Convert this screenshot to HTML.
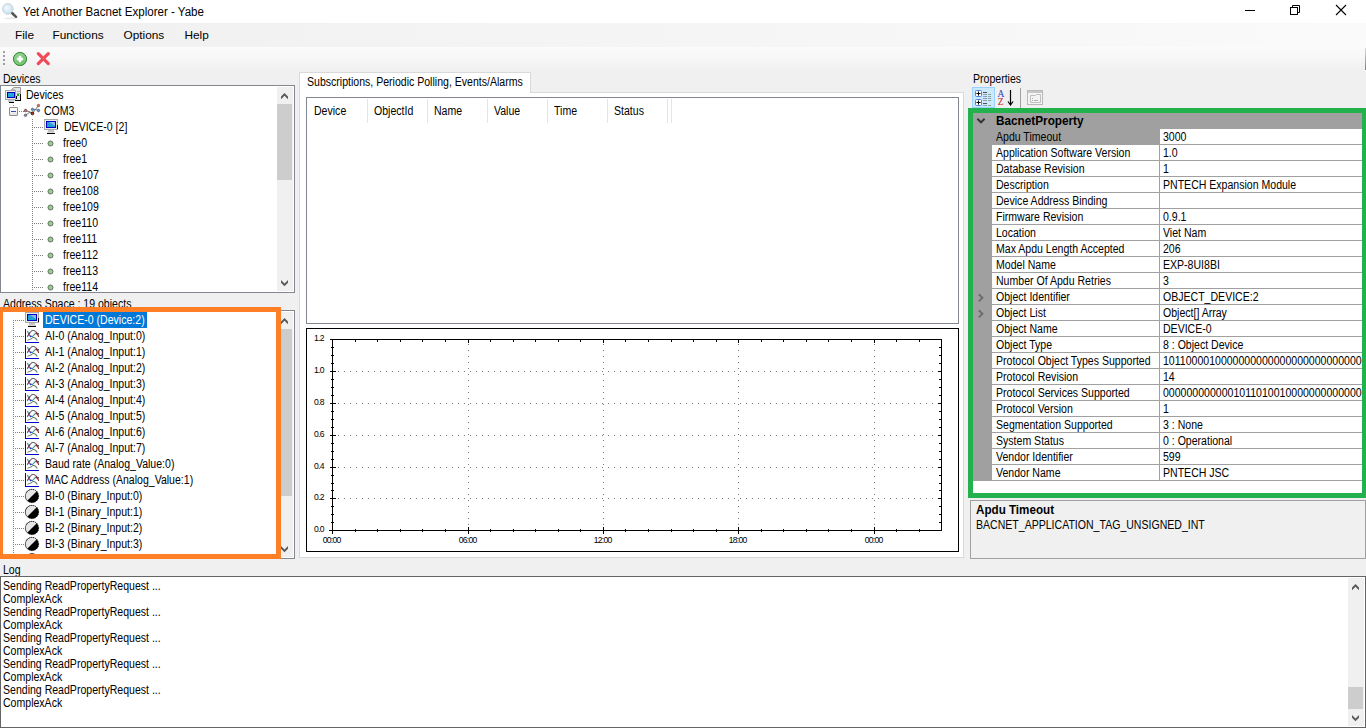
<!DOCTYPE html><html><head><meta charset="utf-8"><style>
html,body{margin:0;padding:0;}
body{width:1366px;height:728px;overflow:hidden;position:relative;background:#f0f0f0;font-family:"Liberation Sans",sans-serif;}
.t{position:absolute;white-space:nowrap;line-height:20px;}
svg{overflow:visible}
</style></head><body>
<div style="position:absolute;left:0px;top:0px;width:1366px;height:23px;background:#fff"></div>
<svg style="position:absolute;left:0px;top:0px;" width="24" height="23" viewBox="0 0 24 23"><defs><radialGradient id="mg" cx="0.4" cy="0.4" r="0.7"><stop offset="0" stop-color="#f4faff"/><stop offset="1" stop-color="#bcdcee"/></radialGradient></defs>
<ellipse cx="10" cy="18.3" rx="6" ry="0.9" fill="#e8e8e8"/>
<circle cx="7.9" cy="8.9" r="5.3" fill="url(#mg)" stroke="#c9d3da" stroke-width="1"/>
<line x1="12.3" y1="13.3" x2="16" y2="16.9" stroke="#555" stroke-width="2.6" stroke-linecap="round"/></svg>
<div class="t" style="left:23px;top:1.84px;font-size:12px;color:#000;transform:scaleX(0.963);transform-origin:0 0;">Yet Another Bacnet Explorer - Yabe</div>
<div style="position:absolute;left:1245px;top:10px;width:10px;height:1px;background:#000"></div>
<svg style="position:absolute;left:1290px;top:5px;" width="11" height="11" viewBox="0 0 11 11"><rect x="0.5" y="2.5" width="7" height="7" fill="none" stroke="#000"/><path d="M2.5 2.5 V0.5 H9.5 V7.5 H7.5" fill="none" stroke="#000"/></svg>
<svg style="position:absolute;left:1336px;top:5px;" width="11" height="11" viewBox="0 0 11 11"><path d="M0 0 L10 10 M10 0 L0 10" stroke="#000" stroke-width="1.1"/></svg>
<div style="position:absolute;left:0px;top:23px;width:1366px;height:24px;background:linear-gradient(to right,#f0f0f0,#fafafa)"></div>
<div class="t" style="left:15px;top:24.71px;font-size:11.8px;color:#000;">File</div>
<div class="t" style="left:52.5px;top:24.71px;font-size:11.8px;color:#000;">Functions</div>
<div class="t" style="left:123.5px;top:24.71px;font-size:11.8px;color:#000;">Options</div>
<div class="t" style="left:184.5px;top:24.71px;font-size:11.8px;color:#000;">Help</div>
<div style="position:absolute;left:0px;top:47px;width:1366px;height:25px;background:linear-gradient(to bottom,#fbfbfb 0%,#f7f7f7 40%,#f0f0f0 100%)"></div>
<div style="position:absolute;left:3px;top:51px;width:2px;height:2px;background:#a0a0a0"></div>
<div style="position:absolute;left:3px;top:55px;width:2px;height:2px;background:#a0a0a0"></div>
<div style="position:absolute;left:3px;top:59px;width:2px;height:2px;background:#a0a0a0"></div>
<div style="position:absolute;left:3px;top:63px;width:2px;height:2px;background:#a0a0a0"></div>
<svg style="position:absolute;left:12px;top:51px;" width="16" height="16" viewBox="0 0 16 16"><defs><radialGradient id="gp" cx="0.45" cy="0.4" r="0.65"><stop offset="0" stop-color="#9ed89a"/><stop offset="0.8" stop-color="#62b85c"/><stop offset="1" stop-color="#4aa046"/></radialGradient></defs><circle cx="8" cy="8" r="6.6" fill="url(#gp)" stroke="#3a8a38" stroke-width="1"/><circle cx="8" cy="8" r="5.2" fill="none" stroke="#b8e4b4" stroke-width="0.6" opacity="0.8"/><path d="M8 4.8 V11.2 M4.8 8 H11.2" stroke="#fff" stroke-width="2.5"/></svg>
<svg style="position:absolute;left:36px;top:51px;" width="15" height="16" viewBox="0 0 15 16"><path d="M2.3 2.6 L12.3 12.6 M12.3 2.6 L2.3 12.6" stroke="#f04a58" stroke-width="3.2" stroke-linecap="round"/><path d="M7.3 6.6 L8.3 7.6 L7.3 8.6 L6.3 7.6 Z" fill="#f46a74"/></svg>
<div class="t" style="left:3px;top:69.04px;font-size:12px;color:#000;transform:scaleX(0.879);transform-origin:0 0;">Devices</div>
<div style="position:absolute;left:0px;top:85px;width:295px;height:208px;background:#fff;border:1px solid #828790;box-sizing:border-box"></div>
<div style="position:absolute;left:277px;top:87px;width:16px;height:204px;background:#f0f0f0"></div>
<div style="position:absolute;left:277px;top:104px;width:15px;height:76px;background:#cdcdcd"></div>
<svg style="position:absolute;left:281px;top:93px;" width="8" height="7" viewBox="0 0 8 7"><path d="M0 3.6 L3.5 0 L7 3.6 L7 6.3 L3.5 2.8 L0 6.3 Z" fill="#5a5a5a"/></svg>
<svg style="position:absolute;left:281px;top:280px;" width="8" height="7" viewBox="0 0 8 7"><path d="M0 0 L3.5 3.5 L7 0 L7 2.7 L3.5 6.3 L0 2.7 Z" fill="#5a5a5a"/></svg>
<svg style="position:absolute;left:5px;top:87px;" width="17" height="17" viewBox="0 0 17 17"><path d="M6.5 2.5 L9 0.5 H15.5 V13.5 H10 V3 H6.5 Z" fill="#e4e4e4" stroke="#9a9a9a" stroke-width="1"/><g shape-rendering="crispEdges"><rect x="12" y="4" width="3" height="1" fill="#b0b0b0"/><rect x="12" y="6" width="3" height="1" fill="#b0b0b0"/><rect x="12" y="7" width="2" height="2" fill="#10b010"/><rect x="11" y="9" width="1" height="3" fill="#000"/><rect x="15" y="7" width="1" height="7" fill="#000"/><rect x="10" y="13" width="6" height="1" fill="#000"/><rect x="0" y="3" width="11" height="10" fill="#a8a8a8"/><rect x="1" y="4" width="9" height="8" fill="#ececec"/><rect x="2" y="5" width="8" height="6" fill="#0000c0"/><rect x="3" y="6" width="6" height="4" fill="#20a8d8"/><rect x="3" y="13" width="6" height="2" fill="#c8c8c8"/><rect x="4" y="15" width="5" height="1" fill="#000"/></g></svg>
<div class="t" style="left:26px;top:84.84px;font-size:12px;color:#000;transform:scaleX(0.879);transform-origin:0 0;">Devices</div>
<div style="position:absolute;left:13px;top:105px;width:1px;height:1px;background:repeating-linear-gradient(to bottom,#808080 0 1px,transparent 1px 2px)"></div>
<div style="position:absolute;left:9px;top:107px;width:9px;height:9px;background:linear-gradient(#fff,#e4e4e4);border:1px solid #8c8c8c;box-sizing:border-box;border-radius:1px"></div>
<div style="position:absolute;left:11px;top:111px;width:5px;height:1px;background:#3050b0"></div>
<div style="position:absolute;left:19px;top:111px;width:5px;height:1px;background:repeating-linear-gradient(to right,#808080 0 1px,transparent 1px 2px)"></div>
<svg style="position:absolute;left:24px;top:104px;" width="17" height="14" viewBox="0 0 17 14"><path d="M-0.5 7.5 L1.6 6.5 L6 8 L8.4 9.4 M1.5 11.3 L6 8 M8.4 9.4 L11.5 5.5 L14.5 1.5 M8.5 5.4 L11.5 5.5 L14.5 6.5" fill="none" stroke="#606060" stroke-width="0.9"/><circle cx="1.6" cy="6.5" r="1.25" fill="#f06060" stroke="#404040" stroke-width="0.7"/><circle cx="1.5" cy="11.3" r="1.25" fill="#7a9ce0" stroke="#505050" stroke-width="0.7"/><circle cx="8.4" cy="9.4" r="1.4" fill="#d03030" stroke="#101010" stroke-width="0.9"/><circle cx="8.5" cy="5.4" r="1.2" fill="#7a9ce0" stroke="#405050" stroke-width="0.7"/><circle cx="9.5" cy="5.4" r="0.8" fill="#10b0d0"/><circle cx="14.5" cy="1.5" r="1.2" fill="#f07070" stroke="#505050" stroke-width="0.7"/><circle cx="14.5" cy="6.5" r="1.2" fill="#7a9ce0" stroke="#305050" stroke-width="0.7"/></svg>
<div class="t" style="left:44px;top:100.84px;font-size:12px;color:#000;transform:scaleX(0.879);transform-origin:0 0;">COM3</div>
<div style="position:absolute;left:32px;top:119px;width:1px;height:172px;background:repeating-linear-gradient(to bottom,#808080 0 1px,transparent 1px 2px)"></div>
<div style="position:absolute;left:34px;top:127px;width:9px;height:1px;background:repeating-linear-gradient(to right,#808080 0 1px,transparent 1px 2px)"></div>
<svg style="position:absolute;left:44px;top:119px;" width="16" height="16" viewBox="0 0 16 16"><g shape-rendering="crispEdges"><rect x="0" y="0" width="14" height="11" fill="#a8a8a8"/><rect x="1" y="1" width="12" height="9" fill="#ececec"/><rect x="2" y="2" width="10" height="7" fill="#0000c0"/><rect x="3" y="3" width="8" height="5" fill="#1ea0d6"/></g><path d="M5 3 L11 3 L11 7 Z" fill="#96b4e4"/><g shape-rendering="crispEdges"><rect x="13" y="6" width="1" height="4" fill="#000"/><rect x="4" y="11" width="6" height="2" fill="#c4c4c4"/><rect x="3" y="13" width="8" height="1" fill="#d8d8d8"/><rect x="3" y="14" width="8" height="1" fill="#000"/></g></svg>
<div class="t" style="left:64px;top:116.84px;font-size:12px;color:#000;transform:scaleX(0.879);transform-origin:0 0;">DEVICE-0 [2]</div>
<div style="position:absolute;left:34px;top:143px;width:9px;height:1px;background:repeating-linear-gradient(to right,#808080 0 1px,transparent 1px 2px)"></div>
<svg style="position:absolute;left:47px;top:139.5px;" width="8" height="8" viewBox="0 0 8 8"><circle cx="3.5" cy="3.5" r="2.5" fill="#8cd28c" stroke="#6c6c6c" stroke-width="1"/></svg>
<div class="t" style="left:63px;top:132.84px;font-size:12px;color:#000;transform:scaleX(0.879);transform-origin:0 0;">free0</div>
<div style="position:absolute;left:34px;top:159px;width:9px;height:1px;background:repeating-linear-gradient(to right,#808080 0 1px,transparent 1px 2px)"></div>
<svg style="position:absolute;left:47px;top:155.5px;" width="8" height="8" viewBox="0 0 8 8"><circle cx="3.5" cy="3.5" r="2.5" fill="#8cd28c" stroke="#6c6c6c" stroke-width="1"/></svg>
<div class="t" style="left:63px;top:148.84px;font-size:12px;color:#000;transform:scaleX(0.879);transform-origin:0 0;">free1</div>
<div style="position:absolute;left:34px;top:175px;width:9px;height:1px;background:repeating-linear-gradient(to right,#808080 0 1px,transparent 1px 2px)"></div>
<svg style="position:absolute;left:47px;top:171.5px;" width="8" height="8" viewBox="0 0 8 8"><circle cx="3.5" cy="3.5" r="2.5" fill="#8cd28c" stroke="#6c6c6c" stroke-width="1"/></svg>
<div class="t" style="left:63px;top:164.84px;font-size:12px;color:#000;transform:scaleX(0.879);transform-origin:0 0;">free107</div>
<div style="position:absolute;left:34px;top:191px;width:9px;height:1px;background:repeating-linear-gradient(to right,#808080 0 1px,transparent 1px 2px)"></div>
<svg style="position:absolute;left:47px;top:187.5px;" width="8" height="8" viewBox="0 0 8 8"><circle cx="3.5" cy="3.5" r="2.5" fill="#8cd28c" stroke="#6c6c6c" stroke-width="1"/></svg>
<div class="t" style="left:63px;top:180.84px;font-size:12px;color:#000;transform:scaleX(0.879);transform-origin:0 0;">free108</div>
<div style="position:absolute;left:34px;top:207px;width:9px;height:1px;background:repeating-linear-gradient(to right,#808080 0 1px,transparent 1px 2px)"></div>
<svg style="position:absolute;left:47px;top:203.5px;" width="8" height="8" viewBox="0 0 8 8"><circle cx="3.5" cy="3.5" r="2.5" fill="#8cd28c" stroke="#6c6c6c" stroke-width="1"/></svg>
<div class="t" style="left:63px;top:196.84px;font-size:12px;color:#000;transform:scaleX(0.879);transform-origin:0 0;">free109</div>
<div style="position:absolute;left:34px;top:223px;width:9px;height:1px;background:repeating-linear-gradient(to right,#808080 0 1px,transparent 1px 2px)"></div>
<svg style="position:absolute;left:47px;top:219.5px;" width="8" height="8" viewBox="0 0 8 8"><circle cx="3.5" cy="3.5" r="2.5" fill="#8cd28c" stroke="#6c6c6c" stroke-width="1"/></svg>
<div class="t" style="left:63px;top:212.84px;font-size:12px;color:#000;transform:scaleX(0.879);transform-origin:0 0;">free110</div>
<div style="position:absolute;left:34px;top:239px;width:9px;height:1px;background:repeating-linear-gradient(to right,#808080 0 1px,transparent 1px 2px)"></div>
<svg style="position:absolute;left:47px;top:235.5px;" width="8" height="8" viewBox="0 0 8 8"><circle cx="3.5" cy="3.5" r="2.5" fill="#8cd28c" stroke="#6c6c6c" stroke-width="1"/></svg>
<div class="t" style="left:63px;top:228.84px;font-size:12px;color:#000;transform:scaleX(0.879);transform-origin:0 0;">free111</div>
<div style="position:absolute;left:34px;top:255px;width:9px;height:1px;background:repeating-linear-gradient(to right,#808080 0 1px,transparent 1px 2px)"></div>
<svg style="position:absolute;left:47px;top:251.5px;" width="8" height="8" viewBox="0 0 8 8"><circle cx="3.5" cy="3.5" r="2.5" fill="#8cd28c" stroke="#6c6c6c" stroke-width="1"/></svg>
<div class="t" style="left:63px;top:244.84px;font-size:12px;color:#000;transform:scaleX(0.879);transform-origin:0 0;">free112</div>
<div style="position:absolute;left:34px;top:271px;width:9px;height:1px;background:repeating-linear-gradient(to right,#808080 0 1px,transparent 1px 2px)"></div>
<svg style="position:absolute;left:47px;top:267.5px;" width="8" height="8" viewBox="0 0 8 8"><circle cx="3.5" cy="3.5" r="2.5" fill="#8cd28c" stroke="#6c6c6c" stroke-width="1"/></svg>
<div class="t" style="left:63px;top:260.84px;font-size:12px;color:#000;transform:scaleX(0.879);transform-origin:0 0;">free113</div>
<div style="position:absolute;left:34px;top:287px;width:9px;height:1px;background:repeating-linear-gradient(to right,#808080 0 1px,transparent 1px 2px)"></div>
<svg style="position:absolute;left:47px;top:283.5px;" width="8" height="8" viewBox="0 0 8 8"><circle cx="3.5" cy="3.5" r="2.5" fill="#8cd28c" stroke="#6c6c6c" stroke-width="1"/></svg>
<div class="t" style="left:63px;top:276.84px;font-size:12px;color:#000;transform:scaleX(0.879);transform-origin:0 0;">free114</div>
<div style="position:absolute;left:0px;top:292px;width:295px;height:1px;background:#828790"></div>
<div class="t" style="left:3px;top:294.24px;font-size:12px;color:#000;transform:scaleX(0.879);transform-origin:0 0;">Address Space : 19 objects</div>
<div style="position:absolute;left:0px;top:310px;width:295px;height:249px;background:#fff;border:1px solid #828790;box-sizing:border-box"></div>
<div style="position:absolute;left:277px;top:312px;width:16px;height:245px;background:#f0f0f0"></div>
<div style="position:absolute;left:277px;top:329px;width:15px;height:167px;background:#cdcdcd"></div>
<svg style="position:absolute;left:281px;top:318px;" width="8" height="7" viewBox="0 0 8 7"><path d="M0 3.6 L3.5 0 L7 3.6 L7 6.3 L3.5 2.8 L0 6.3 Z" fill="#5a5a5a"/></svg>
<svg style="position:absolute;left:281px;top:546px;" width="8" height="7" viewBox="0 0 8 7"><path d="M0 0 L3.5 3.5 L7 0 L7 2.7 L3.5 6.3 L0 2.7 Z" fill="#5a5a5a"/></svg>
<div style="position:absolute;left:13px;top:320px;width:1px;height:238px;background:repeating-linear-gradient(to bottom,#808080 0 1px,transparent 1px 2px)"></div>
<div style="position:absolute;left:15px;top:320px;width:9px;height:1px;background:repeating-linear-gradient(to right,#808080 0 1px,transparent 1px 2px)"></div>
<svg style="position:absolute;left:25px;top:312px;" width="16" height="16" viewBox="0 0 16 16"><g shape-rendering="crispEdges"><rect x="0" y="0" width="14" height="11" fill="#a8a8a8"/><rect x="1" y="1" width="12" height="9" fill="#ececec"/><rect x="2" y="2" width="10" height="7" fill="#0000c0"/><rect x="3" y="3" width="8" height="5" fill="#1ea0d6"/></g><path d="M5 3 L11 3 L11 7 Z" fill="#96b4e4"/><g shape-rendering="crispEdges"><rect x="13" y="6" width="1" height="4" fill="#000"/><rect x="4" y="11" width="6" height="2" fill="#c4c4c4"/><rect x="3" y="13" width="8" height="1" fill="#d8d8d8"/><rect x="3" y="14" width="8" height="1" fill="#000"/></g></svg>
<div style="position:absolute;left:43px;top:312px;width:104px;height:16px;background:#0078d7"></div>
<div class="t" style="left:45px;top:309.84px;font-size:12px;color:#fff;transform:scaleX(0.879);transform-origin:0 0;">DEVICE-0 (Device:2)</div>
<div style="position:absolute;left:15px;top:336px;width:9px;height:1px;background:repeating-linear-gradient(to right,#808080 0 1px,transparent 1px 2px)"></div>
<svg style="position:absolute;left:25px;top:328px;" width="16" height="16" viewBox="0 0 16 16"><path d="M2.4 3 C3.5 5 4.5 8.4 5.7 8.4 L7.4 8.4 C8.5 8.4 9.5 5.4 10.8 5.4 L14 5.5" fill="none" stroke="#2a8aa0" stroke-width="1.1"/><path d="M2.4 8.7 C3.3 7 4.5 4.5 5.6 4" fill="none" stroke="#8a2020" stroke-width="1.1"/><path d="M5.6 4 C6.5 2.6 7.2 2.4 8 2.4 C9.5 2.4 10.5 3.5 11 4" fill="none" stroke="#707070" stroke-width="1.1"/><path d="M11 4 C12 5 13.3 6.5 13.7 9" fill="none" stroke="#7a2a2a" stroke-width="1.1"/><path d="M2.4 12.3 C4 12 5 11.4 6 10.9 C7 10 8 9.5 8.5 9.5 C9.5 9.5 10.5 10.2 10.9 10.6 C11.5 11.4 12 12 12.3 12.6" fill="none" stroke="#6a7a6a" stroke-width="1.1"/><circle cx="12.4" cy="6.4" r="0.9" fill="#f00"/><circle cx="5.6" cy="8.4" r="0.8" fill="#1030e0"/><rect x="0" y="1" width="1" height="14" fill="#0000c8" shape-rendering="crispEdges"/><rect x="0" y="14" width="14" height="1" fill="#0000c8" shape-rendering="crispEdges"/></svg>
<div class="t" style="left:45px;top:325.84px;font-size:12px;color:#000;transform:scaleX(0.879);transform-origin:0 0;">AI-0 (Analog_Input:0)</div>
<div style="position:absolute;left:15px;top:352px;width:9px;height:1px;background:repeating-linear-gradient(to right,#808080 0 1px,transparent 1px 2px)"></div>
<svg style="position:absolute;left:25px;top:344px;" width="16" height="16" viewBox="0 0 16 16"><path d="M2.4 3 C3.5 5 4.5 8.4 5.7 8.4 L7.4 8.4 C8.5 8.4 9.5 5.4 10.8 5.4 L14 5.5" fill="none" stroke="#2a8aa0" stroke-width="1.1"/><path d="M2.4 8.7 C3.3 7 4.5 4.5 5.6 4" fill="none" stroke="#8a2020" stroke-width="1.1"/><path d="M5.6 4 C6.5 2.6 7.2 2.4 8 2.4 C9.5 2.4 10.5 3.5 11 4" fill="none" stroke="#707070" stroke-width="1.1"/><path d="M11 4 C12 5 13.3 6.5 13.7 9" fill="none" stroke="#7a2a2a" stroke-width="1.1"/><path d="M2.4 12.3 C4 12 5 11.4 6 10.9 C7 10 8 9.5 8.5 9.5 C9.5 9.5 10.5 10.2 10.9 10.6 C11.5 11.4 12 12 12.3 12.6" fill="none" stroke="#6a7a6a" stroke-width="1.1"/><circle cx="12.4" cy="6.4" r="0.9" fill="#f00"/><circle cx="5.6" cy="8.4" r="0.8" fill="#1030e0"/><rect x="0" y="1" width="1" height="14" fill="#0000c8" shape-rendering="crispEdges"/><rect x="0" y="14" width="14" height="1" fill="#0000c8" shape-rendering="crispEdges"/></svg>
<div class="t" style="left:45px;top:341.84px;font-size:12px;color:#000;transform:scaleX(0.879);transform-origin:0 0;">AI-1 (Analog_Input:1)</div>
<div style="position:absolute;left:15px;top:368px;width:9px;height:1px;background:repeating-linear-gradient(to right,#808080 0 1px,transparent 1px 2px)"></div>
<svg style="position:absolute;left:25px;top:360px;" width="16" height="16" viewBox="0 0 16 16"><path d="M2.4 3 C3.5 5 4.5 8.4 5.7 8.4 L7.4 8.4 C8.5 8.4 9.5 5.4 10.8 5.4 L14 5.5" fill="none" stroke="#2a8aa0" stroke-width="1.1"/><path d="M2.4 8.7 C3.3 7 4.5 4.5 5.6 4" fill="none" stroke="#8a2020" stroke-width="1.1"/><path d="M5.6 4 C6.5 2.6 7.2 2.4 8 2.4 C9.5 2.4 10.5 3.5 11 4" fill="none" stroke="#707070" stroke-width="1.1"/><path d="M11 4 C12 5 13.3 6.5 13.7 9" fill="none" stroke="#7a2a2a" stroke-width="1.1"/><path d="M2.4 12.3 C4 12 5 11.4 6 10.9 C7 10 8 9.5 8.5 9.5 C9.5 9.5 10.5 10.2 10.9 10.6 C11.5 11.4 12 12 12.3 12.6" fill="none" stroke="#6a7a6a" stroke-width="1.1"/><circle cx="12.4" cy="6.4" r="0.9" fill="#f00"/><circle cx="5.6" cy="8.4" r="0.8" fill="#1030e0"/><rect x="0" y="1" width="1" height="14" fill="#0000c8" shape-rendering="crispEdges"/><rect x="0" y="14" width="14" height="1" fill="#0000c8" shape-rendering="crispEdges"/></svg>
<div class="t" style="left:45px;top:357.84px;font-size:12px;color:#000;transform:scaleX(0.879);transform-origin:0 0;">AI-2 (Analog_Input:2)</div>
<div style="position:absolute;left:15px;top:384px;width:9px;height:1px;background:repeating-linear-gradient(to right,#808080 0 1px,transparent 1px 2px)"></div>
<svg style="position:absolute;left:25px;top:376px;" width="16" height="16" viewBox="0 0 16 16"><path d="M2.4 3 C3.5 5 4.5 8.4 5.7 8.4 L7.4 8.4 C8.5 8.4 9.5 5.4 10.8 5.4 L14 5.5" fill="none" stroke="#2a8aa0" stroke-width="1.1"/><path d="M2.4 8.7 C3.3 7 4.5 4.5 5.6 4" fill="none" stroke="#8a2020" stroke-width="1.1"/><path d="M5.6 4 C6.5 2.6 7.2 2.4 8 2.4 C9.5 2.4 10.5 3.5 11 4" fill="none" stroke="#707070" stroke-width="1.1"/><path d="M11 4 C12 5 13.3 6.5 13.7 9" fill="none" stroke="#7a2a2a" stroke-width="1.1"/><path d="M2.4 12.3 C4 12 5 11.4 6 10.9 C7 10 8 9.5 8.5 9.5 C9.5 9.5 10.5 10.2 10.9 10.6 C11.5 11.4 12 12 12.3 12.6" fill="none" stroke="#6a7a6a" stroke-width="1.1"/><circle cx="12.4" cy="6.4" r="0.9" fill="#f00"/><circle cx="5.6" cy="8.4" r="0.8" fill="#1030e0"/><rect x="0" y="1" width="1" height="14" fill="#0000c8" shape-rendering="crispEdges"/><rect x="0" y="14" width="14" height="1" fill="#0000c8" shape-rendering="crispEdges"/></svg>
<div class="t" style="left:45px;top:373.84px;font-size:12px;color:#000;transform:scaleX(0.879);transform-origin:0 0;">AI-3 (Analog_Input:3)</div>
<div style="position:absolute;left:15px;top:400px;width:9px;height:1px;background:repeating-linear-gradient(to right,#808080 0 1px,transparent 1px 2px)"></div>
<svg style="position:absolute;left:25px;top:392px;" width="16" height="16" viewBox="0 0 16 16"><path d="M2.4 3 C3.5 5 4.5 8.4 5.7 8.4 L7.4 8.4 C8.5 8.4 9.5 5.4 10.8 5.4 L14 5.5" fill="none" stroke="#2a8aa0" stroke-width="1.1"/><path d="M2.4 8.7 C3.3 7 4.5 4.5 5.6 4" fill="none" stroke="#8a2020" stroke-width="1.1"/><path d="M5.6 4 C6.5 2.6 7.2 2.4 8 2.4 C9.5 2.4 10.5 3.5 11 4" fill="none" stroke="#707070" stroke-width="1.1"/><path d="M11 4 C12 5 13.3 6.5 13.7 9" fill="none" stroke="#7a2a2a" stroke-width="1.1"/><path d="M2.4 12.3 C4 12 5 11.4 6 10.9 C7 10 8 9.5 8.5 9.5 C9.5 9.5 10.5 10.2 10.9 10.6 C11.5 11.4 12 12 12.3 12.6" fill="none" stroke="#6a7a6a" stroke-width="1.1"/><circle cx="12.4" cy="6.4" r="0.9" fill="#f00"/><circle cx="5.6" cy="8.4" r="0.8" fill="#1030e0"/><rect x="0" y="1" width="1" height="14" fill="#0000c8" shape-rendering="crispEdges"/><rect x="0" y="14" width="14" height="1" fill="#0000c8" shape-rendering="crispEdges"/></svg>
<div class="t" style="left:45px;top:389.84px;font-size:12px;color:#000;transform:scaleX(0.879);transform-origin:0 0;">AI-4 (Analog_Input:4)</div>
<div style="position:absolute;left:15px;top:416px;width:9px;height:1px;background:repeating-linear-gradient(to right,#808080 0 1px,transparent 1px 2px)"></div>
<svg style="position:absolute;left:25px;top:408px;" width="16" height="16" viewBox="0 0 16 16"><path d="M2.4 3 C3.5 5 4.5 8.4 5.7 8.4 L7.4 8.4 C8.5 8.4 9.5 5.4 10.8 5.4 L14 5.5" fill="none" stroke="#2a8aa0" stroke-width="1.1"/><path d="M2.4 8.7 C3.3 7 4.5 4.5 5.6 4" fill="none" stroke="#8a2020" stroke-width="1.1"/><path d="M5.6 4 C6.5 2.6 7.2 2.4 8 2.4 C9.5 2.4 10.5 3.5 11 4" fill="none" stroke="#707070" stroke-width="1.1"/><path d="M11 4 C12 5 13.3 6.5 13.7 9" fill="none" stroke="#7a2a2a" stroke-width="1.1"/><path d="M2.4 12.3 C4 12 5 11.4 6 10.9 C7 10 8 9.5 8.5 9.5 C9.5 9.5 10.5 10.2 10.9 10.6 C11.5 11.4 12 12 12.3 12.6" fill="none" stroke="#6a7a6a" stroke-width="1.1"/><circle cx="12.4" cy="6.4" r="0.9" fill="#f00"/><circle cx="5.6" cy="8.4" r="0.8" fill="#1030e0"/><rect x="0" y="1" width="1" height="14" fill="#0000c8" shape-rendering="crispEdges"/><rect x="0" y="14" width="14" height="1" fill="#0000c8" shape-rendering="crispEdges"/></svg>
<div class="t" style="left:45px;top:405.84px;font-size:12px;color:#000;transform:scaleX(0.879);transform-origin:0 0;">AI-5 (Analog_Input:5)</div>
<div style="position:absolute;left:15px;top:432px;width:9px;height:1px;background:repeating-linear-gradient(to right,#808080 0 1px,transparent 1px 2px)"></div>
<svg style="position:absolute;left:25px;top:424px;" width="16" height="16" viewBox="0 0 16 16"><path d="M2.4 3 C3.5 5 4.5 8.4 5.7 8.4 L7.4 8.4 C8.5 8.4 9.5 5.4 10.8 5.4 L14 5.5" fill="none" stroke="#2a8aa0" stroke-width="1.1"/><path d="M2.4 8.7 C3.3 7 4.5 4.5 5.6 4" fill="none" stroke="#8a2020" stroke-width="1.1"/><path d="M5.6 4 C6.5 2.6 7.2 2.4 8 2.4 C9.5 2.4 10.5 3.5 11 4" fill="none" stroke="#707070" stroke-width="1.1"/><path d="M11 4 C12 5 13.3 6.5 13.7 9" fill="none" stroke="#7a2a2a" stroke-width="1.1"/><path d="M2.4 12.3 C4 12 5 11.4 6 10.9 C7 10 8 9.5 8.5 9.5 C9.5 9.5 10.5 10.2 10.9 10.6 C11.5 11.4 12 12 12.3 12.6" fill="none" stroke="#6a7a6a" stroke-width="1.1"/><circle cx="12.4" cy="6.4" r="0.9" fill="#f00"/><circle cx="5.6" cy="8.4" r="0.8" fill="#1030e0"/><rect x="0" y="1" width="1" height="14" fill="#0000c8" shape-rendering="crispEdges"/><rect x="0" y="14" width="14" height="1" fill="#0000c8" shape-rendering="crispEdges"/></svg>
<div class="t" style="left:45px;top:421.84px;font-size:12px;color:#000;transform:scaleX(0.879);transform-origin:0 0;">AI-6 (Analog_Input:6)</div>
<div style="position:absolute;left:15px;top:448px;width:9px;height:1px;background:repeating-linear-gradient(to right,#808080 0 1px,transparent 1px 2px)"></div>
<svg style="position:absolute;left:25px;top:440px;" width="16" height="16" viewBox="0 0 16 16"><path d="M2.4 3 C3.5 5 4.5 8.4 5.7 8.4 L7.4 8.4 C8.5 8.4 9.5 5.4 10.8 5.4 L14 5.5" fill="none" stroke="#2a8aa0" stroke-width="1.1"/><path d="M2.4 8.7 C3.3 7 4.5 4.5 5.6 4" fill="none" stroke="#8a2020" stroke-width="1.1"/><path d="M5.6 4 C6.5 2.6 7.2 2.4 8 2.4 C9.5 2.4 10.5 3.5 11 4" fill="none" stroke="#707070" stroke-width="1.1"/><path d="M11 4 C12 5 13.3 6.5 13.7 9" fill="none" stroke="#7a2a2a" stroke-width="1.1"/><path d="M2.4 12.3 C4 12 5 11.4 6 10.9 C7 10 8 9.5 8.5 9.5 C9.5 9.5 10.5 10.2 10.9 10.6 C11.5 11.4 12 12 12.3 12.6" fill="none" stroke="#6a7a6a" stroke-width="1.1"/><circle cx="12.4" cy="6.4" r="0.9" fill="#f00"/><circle cx="5.6" cy="8.4" r="0.8" fill="#1030e0"/><rect x="0" y="1" width="1" height="14" fill="#0000c8" shape-rendering="crispEdges"/><rect x="0" y="14" width="14" height="1" fill="#0000c8" shape-rendering="crispEdges"/></svg>
<div class="t" style="left:45px;top:437.84px;font-size:12px;color:#000;transform:scaleX(0.879);transform-origin:0 0;">AI-7 (Analog_Input:7)</div>
<div style="position:absolute;left:15px;top:464px;width:9px;height:1px;background:repeating-linear-gradient(to right,#808080 0 1px,transparent 1px 2px)"></div>
<svg style="position:absolute;left:25px;top:456px;" width="16" height="16" viewBox="0 0 16 16"><path d="M2.4 3 C3.5 5 4.5 8.4 5.7 8.4 L7.4 8.4 C8.5 8.4 9.5 5.4 10.8 5.4 L14 5.5" fill="none" stroke="#2a8aa0" stroke-width="1.1"/><path d="M2.4 8.7 C3.3 7 4.5 4.5 5.6 4" fill="none" stroke="#8a2020" stroke-width="1.1"/><path d="M5.6 4 C6.5 2.6 7.2 2.4 8 2.4 C9.5 2.4 10.5 3.5 11 4" fill="none" stroke="#707070" stroke-width="1.1"/><path d="M11 4 C12 5 13.3 6.5 13.7 9" fill="none" stroke="#7a2a2a" stroke-width="1.1"/><path d="M2.4 12.3 C4 12 5 11.4 6 10.9 C7 10 8 9.5 8.5 9.5 C9.5 9.5 10.5 10.2 10.9 10.6 C11.5 11.4 12 12 12.3 12.6" fill="none" stroke="#6a7a6a" stroke-width="1.1"/><circle cx="12.4" cy="6.4" r="0.9" fill="#f00"/><circle cx="5.6" cy="8.4" r="0.8" fill="#1030e0"/><rect x="0" y="1" width="1" height="14" fill="#0000c8" shape-rendering="crispEdges"/><rect x="0" y="14" width="14" height="1" fill="#0000c8" shape-rendering="crispEdges"/></svg>
<div class="t" style="left:45px;top:453.84px;font-size:12px;color:#000;transform:scaleX(0.879);transform-origin:0 0;">Baud rate (Analog_Value:0)</div>
<div style="position:absolute;left:15px;top:480px;width:9px;height:1px;background:repeating-linear-gradient(to right,#808080 0 1px,transparent 1px 2px)"></div>
<svg style="position:absolute;left:25px;top:472px;" width="16" height="16" viewBox="0 0 16 16"><path d="M2.4 3 C3.5 5 4.5 8.4 5.7 8.4 L7.4 8.4 C8.5 8.4 9.5 5.4 10.8 5.4 L14 5.5" fill="none" stroke="#2a8aa0" stroke-width="1.1"/><path d="M2.4 8.7 C3.3 7 4.5 4.5 5.6 4" fill="none" stroke="#8a2020" stroke-width="1.1"/><path d="M5.6 4 C6.5 2.6 7.2 2.4 8 2.4 C9.5 2.4 10.5 3.5 11 4" fill="none" stroke="#707070" stroke-width="1.1"/><path d="M11 4 C12 5 13.3 6.5 13.7 9" fill="none" stroke="#7a2a2a" stroke-width="1.1"/><path d="M2.4 12.3 C4 12 5 11.4 6 10.9 C7 10 8 9.5 8.5 9.5 C9.5 9.5 10.5 10.2 10.9 10.6 C11.5 11.4 12 12 12.3 12.6" fill="none" stroke="#6a7a6a" stroke-width="1.1"/><circle cx="12.4" cy="6.4" r="0.9" fill="#f00"/><circle cx="5.6" cy="8.4" r="0.8" fill="#1030e0"/><rect x="0" y="1" width="1" height="14" fill="#0000c8" shape-rendering="crispEdges"/><rect x="0" y="14" width="14" height="1" fill="#0000c8" shape-rendering="crispEdges"/></svg>
<div class="t" style="left:45px;top:469.84px;font-size:12px;color:#000;transform:scaleX(0.879);transform-origin:0 0;">MAC Address (Analog_Value:1)</div>
<div style="position:absolute;left:15px;top:496px;width:9px;height:1px;background:repeating-linear-gradient(to right,#808080 0 1px,transparent 1px 2px)"></div>
<svg style="position:absolute;left:25px;top:489px;" width="16" height="16" viewBox="0 0 16 16"><circle cx="7" cy="7" r="6.8" fill="#000"/>
<path d="M2.2 11.8 A6.8 6.8 0 0 1 11.8 2.2 Z" fill="#e6e6e6"/>
<circle cx="7" cy="7" r="6.6" fill="none" stroke="#000" stroke-width="0.8" stroke-dasharray="1 1"/></svg>
<div class="t" style="left:45px;top:485.84px;font-size:12px;color:#000;transform:scaleX(0.879);transform-origin:0 0;">BI-0 (Binary_Input:0)</div>
<div style="position:absolute;left:15px;top:512px;width:9px;height:1px;background:repeating-linear-gradient(to right,#808080 0 1px,transparent 1px 2px)"></div>
<svg style="position:absolute;left:25px;top:505px;" width="16" height="16" viewBox="0 0 16 16"><circle cx="7" cy="7" r="6.8" fill="#000"/>
<path d="M2.2 11.8 A6.8 6.8 0 0 1 11.8 2.2 Z" fill="#e6e6e6"/>
<circle cx="7" cy="7" r="6.6" fill="none" stroke="#000" stroke-width="0.8" stroke-dasharray="1 1"/></svg>
<div class="t" style="left:45px;top:501.84px;font-size:12px;color:#000;transform:scaleX(0.879);transform-origin:0 0;">BI-1 (Binary_Input:1)</div>
<div style="position:absolute;left:15px;top:528px;width:9px;height:1px;background:repeating-linear-gradient(to right,#808080 0 1px,transparent 1px 2px)"></div>
<svg style="position:absolute;left:25px;top:521px;" width="16" height="16" viewBox="0 0 16 16"><circle cx="7" cy="7" r="6.8" fill="#000"/>
<path d="M2.2 11.8 A6.8 6.8 0 0 1 11.8 2.2 Z" fill="#e6e6e6"/>
<circle cx="7" cy="7" r="6.6" fill="none" stroke="#000" stroke-width="0.8" stroke-dasharray="1 1"/></svg>
<div class="t" style="left:45px;top:517.84px;font-size:12px;color:#000;transform:scaleX(0.879);transform-origin:0 0;">BI-2 (Binary_Input:2)</div>
<div style="position:absolute;left:15px;top:544px;width:9px;height:1px;background:repeating-linear-gradient(to right,#808080 0 1px,transparent 1px 2px)"></div>
<svg style="position:absolute;left:25px;top:537px;" width="16" height="16" viewBox="0 0 16 16"><circle cx="7" cy="7" r="6.8" fill="#000"/>
<path d="M2.2 11.8 A6.8 6.8 0 0 1 11.8 2.2 Z" fill="#e6e6e6"/>
<circle cx="7" cy="7" r="6.6" fill="none" stroke="#000" stroke-width="0.8" stroke-dasharray="1 1"/></svg>
<div class="t" style="left:45px;top:533.84px;font-size:12px;color:#000;transform:scaleX(0.879);transform-origin:0 0;">BI-3 (Binary_Input:3)</div>
<svg style="position:absolute;left:25px;top:553px;overflow:hidden" width="16" height="5" viewBox="0 0 16 5"><circle cx="7" cy="7" r="6.8" fill="#000"/></svg>
<div style="position:absolute;left:1px;top:558px;width:293px;height:1px;background:#828790"></div>
<div style="position:absolute;left:-2px;top:307px;width:283px;height:252px;border:5px solid #ff7f27;box-sizing:border-box"></div>
<div style="position:absolute;left:299px;top:92px;width:665px;height:466px;background:#fff;border:1px solid #d9d9d9;box-sizing:border-box"></div>
<div style="position:absolute;left:299px;top:72px;width:232px;height:21px;background:#fff;border:1px solid #d9d9d9;border-bottom:none;box-sizing:border-box"></div>
<div class="t" style="left:307px;top:72.04px;font-size:12px;color:#000;transform:scaleX(0.879);transform-origin:0 0;">Subscriptions, Periodic Polling, Events/Alarms</div>
<div style="position:absolute;left:306px;top:97px;width:653px;height:227px;background:#fff;border:1px solid #828790;box-sizing:border-box"></div>
<div class="t" style="left:314px;top:101.34px;font-size:12px;color:#000;transform:scaleX(0.879);transform-origin:0 0;">Device</div>
<div class="t" style="left:374px;top:101.34px;font-size:12px;color:#000;transform:scaleX(0.879);transform-origin:0 0;">ObjectId</div>
<div class="t" style="left:434px;top:101.34px;font-size:12px;color:#000;transform:scaleX(0.879);transform-origin:0 0;">Name</div>
<div class="t" style="left:494px;top:101.34px;font-size:12px;color:#000;transform:scaleX(0.879);transform-origin:0 0;">Value</div>
<div class="t" style="left:554px;top:101.34px;font-size:12px;color:#000;transform:scaleX(0.879);transform-origin:0 0;">Time</div>
<div class="t" style="left:614px;top:101.34px;font-size:12px;color:#000;transform:scaleX(0.879);transform-origin:0 0;">Status</div>
<div style="position:absolute;left:367px;top:99px;width:1px;height:24px;background:#e5e5e5"></div>
<div style="position:absolute;left:427px;top:99px;width:1px;height:24px;background:#e5e5e5"></div>
<div style="position:absolute;left:487px;top:99px;width:1px;height:24px;background:#e5e5e5"></div>
<div style="position:absolute;left:547px;top:99px;width:1px;height:24px;background:#e5e5e5"></div>
<div style="position:absolute;left:607px;top:99px;width:1px;height:24px;background:#e5e5e5"></div>
<div style="position:absolute;left:667px;top:99px;width:1px;height:24px;background:#e5e5e5"></div>
<div style="position:absolute;left:671px;top:99px;width:1px;height:24px;background:#e5e5e5"></div>
<div style="position:absolute;left:306px;top:328px;width:653px;height:224px;background:#fff;border:1px solid #000;box-sizing:border-box"></div>
<svg style="position:absolute;left:0;top:0" width="1366" height="728" shape-rendering="crispEdges"><rect x="338" y="371" width="1" height="1" fill="#7a7a7a"/><rect x="344" y="371" width="1" height="1" fill="#7a7a7a"/><rect x="350" y="371" width="1" height="1" fill="#7a7a7a"/><rect x="356" y="371" width="1" height="1" fill="#7a7a7a"/><rect x="362" y="371" width="1" height="1" fill="#7a7a7a"/><rect x="368" y="371" width="1" height="1" fill="#7a7a7a"/><rect x="374" y="371" width="1" height="1" fill="#7a7a7a"/><rect x="380" y="371" width="1" height="1" fill="#7a7a7a"/><rect x="386" y="371" width="1" height="1" fill="#7a7a7a"/><rect x="392" y="371" width="1" height="1" fill="#7a7a7a"/><rect x="398" y="371" width="1" height="1" fill="#7a7a7a"/><rect x="404" y="371" width="1" height="1" fill="#7a7a7a"/><rect x="410" y="371" width="1" height="1" fill="#7a7a7a"/><rect x="416" y="371" width="1" height="1" fill="#7a7a7a"/><rect x="422" y="371" width="1" height="1" fill="#7a7a7a"/><rect x="428" y="371" width="1" height="1" fill="#7a7a7a"/><rect x="434" y="371" width="1" height="1" fill="#7a7a7a"/><rect x="440" y="371" width="1" height="1" fill="#7a7a7a"/><rect x="446" y="371" width="1" height="1" fill="#7a7a7a"/><rect x="452" y="371" width="1" height="1" fill="#7a7a7a"/><rect x="458" y="371" width="1" height="1" fill="#7a7a7a"/><rect x="464" y="371" width="1" height="1" fill="#7a7a7a"/><rect x="470" y="371" width="1" height="1" fill="#7a7a7a"/><rect x="476" y="371" width="1" height="1" fill="#7a7a7a"/><rect x="482" y="371" width="1" height="1" fill="#7a7a7a"/><rect x="488" y="371" width="1" height="1" fill="#7a7a7a"/><rect x="494" y="371" width="1" height="1" fill="#7a7a7a"/><rect x="500" y="371" width="1" height="1" fill="#7a7a7a"/><rect x="506" y="371" width="1" height="1" fill="#7a7a7a"/><rect x="512" y="371" width="1" height="1" fill="#7a7a7a"/><rect x="518" y="371" width="1" height="1" fill="#7a7a7a"/><rect x="524" y="371" width="1" height="1" fill="#7a7a7a"/><rect x="530" y="371" width="1" height="1" fill="#7a7a7a"/><rect x="536" y="371" width="1" height="1" fill="#7a7a7a"/><rect x="542" y="371" width="1" height="1" fill="#7a7a7a"/><rect x="548" y="371" width="1" height="1" fill="#7a7a7a"/><rect x="554" y="371" width="1" height="1" fill="#7a7a7a"/><rect x="560" y="371" width="1" height="1" fill="#7a7a7a"/><rect x="566" y="371" width="1" height="1" fill="#7a7a7a"/><rect x="572" y="371" width="1" height="1" fill="#7a7a7a"/><rect x="578" y="371" width="1" height="1" fill="#7a7a7a"/><rect x="584" y="371" width="1" height="1" fill="#7a7a7a"/><rect x="590" y="371" width="1" height="1" fill="#7a7a7a"/><rect x="596" y="371" width="1" height="1" fill="#7a7a7a"/><rect x="602" y="371" width="1" height="1" fill="#7a7a7a"/><rect x="608" y="371" width="1" height="1" fill="#7a7a7a"/><rect x="614" y="371" width="1" height="1" fill="#7a7a7a"/><rect x="620" y="371" width="1" height="1" fill="#7a7a7a"/><rect x="626" y="371" width="1" height="1" fill="#7a7a7a"/><rect x="632" y="371" width="1" height="1" fill="#7a7a7a"/><rect x="638" y="371" width="1" height="1" fill="#7a7a7a"/><rect x="644" y="371" width="1" height="1" fill="#7a7a7a"/><rect x="650" y="371" width="1" height="1" fill="#7a7a7a"/><rect x="656" y="371" width="1" height="1" fill="#7a7a7a"/><rect x="662" y="371" width="1" height="1" fill="#7a7a7a"/><rect x="668" y="371" width="1" height="1" fill="#7a7a7a"/><rect x="674" y="371" width="1" height="1" fill="#7a7a7a"/><rect x="680" y="371" width="1" height="1" fill="#7a7a7a"/><rect x="686" y="371" width="1" height="1" fill="#7a7a7a"/><rect x="692" y="371" width="1" height="1" fill="#7a7a7a"/><rect x="698" y="371" width="1" height="1" fill="#7a7a7a"/><rect x="704" y="371" width="1" height="1" fill="#7a7a7a"/><rect x="710" y="371" width="1" height="1" fill="#7a7a7a"/><rect x="716" y="371" width="1" height="1" fill="#7a7a7a"/><rect x="722" y="371" width="1" height="1" fill="#7a7a7a"/><rect x="728" y="371" width="1" height="1" fill="#7a7a7a"/><rect x="734" y="371" width="1" height="1" fill="#7a7a7a"/><rect x="740" y="371" width="1" height="1" fill="#7a7a7a"/><rect x="746" y="371" width="1" height="1" fill="#7a7a7a"/><rect x="752" y="371" width="1" height="1" fill="#7a7a7a"/><rect x="758" y="371" width="1" height="1" fill="#7a7a7a"/><rect x="764" y="371" width="1" height="1" fill="#7a7a7a"/><rect x="770" y="371" width="1" height="1" fill="#7a7a7a"/><rect x="776" y="371" width="1" height="1" fill="#7a7a7a"/><rect x="782" y="371" width="1" height="1" fill="#7a7a7a"/><rect x="788" y="371" width="1" height="1" fill="#7a7a7a"/><rect x="794" y="371" width="1" height="1" fill="#7a7a7a"/><rect x="800" y="371" width="1" height="1" fill="#7a7a7a"/><rect x="806" y="371" width="1" height="1" fill="#7a7a7a"/><rect x="812" y="371" width="1" height="1" fill="#7a7a7a"/><rect x="818" y="371" width="1" height="1" fill="#7a7a7a"/><rect x="824" y="371" width="1" height="1" fill="#7a7a7a"/><rect x="830" y="371" width="1" height="1" fill="#7a7a7a"/><rect x="836" y="371" width="1" height="1" fill="#7a7a7a"/><rect x="842" y="371" width="1" height="1" fill="#7a7a7a"/><rect x="848" y="371" width="1" height="1" fill="#7a7a7a"/><rect x="854" y="371" width="1" height="1" fill="#7a7a7a"/><rect x="860" y="371" width="1" height="1" fill="#7a7a7a"/><rect x="866" y="371" width="1" height="1" fill="#7a7a7a"/><rect x="872" y="371" width="1" height="1" fill="#7a7a7a"/><rect x="878" y="371" width="1" height="1" fill="#7a7a7a"/><rect x="884" y="371" width="1" height="1" fill="#7a7a7a"/><rect x="890" y="371" width="1" height="1" fill="#7a7a7a"/><rect x="896" y="371" width="1" height="1" fill="#7a7a7a"/><rect x="902" y="371" width="1" height="1" fill="#7a7a7a"/><rect x="908" y="371" width="1" height="1" fill="#7a7a7a"/><rect x="914" y="371" width="1" height="1" fill="#7a7a7a"/><rect x="920" y="371" width="1" height="1" fill="#7a7a7a"/><rect x="926" y="371" width="1" height="1" fill="#7a7a7a"/><rect x="932" y="371" width="1" height="1" fill="#7a7a7a"/><rect x="938" y="371" width="1" height="1" fill="#7a7a7a"/><rect x="338" y="403" width="1" height="1" fill="#7a7a7a"/><rect x="344" y="403" width="1" height="1" fill="#7a7a7a"/><rect x="350" y="403" width="1" height="1" fill="#7a7a7a"/><rect x="356" y="403" width="1" height="1" fill="#7a7a7a"/><rect x="362" y="403" width="1" height="1" fill="#7a7a7a"/><rect x="368" y="403" width="1" height="1" fill="#7a7a7a"/><rect x="374" y="403" width="1" height="1" fill="#7a7a7a"/><rect x="380" y="403" width="1" height="1" fill="#7a7a7a"/><rect x="386" y="403" width="1" height="1" fill="#7a7a7a"/><rect x="392" y="403" width="1" height="1" fill="#7a7a7a"/><rect x="398" y="403" width="1" height="1" fill="#7a7a7a"/><rect x="404" y="403" width="1" height="1" fill="#7a7a7a"/><rect x="410" y="403" width="1" height="1" fill="#7a7a7a"/><rect x="416" y="403" width="1" height="1" fill="#7a7a7a"/><rect x="422" y="403" width="1" height="1" fill="#7a7a7a"/><rect x="428" y="403" width="1" height="1" fill="#7a7a7a"/><rect x="434" y="403" width="1" height="1" fill="#7a7a7a"/><rect x="440" y="403" width="1" height="1" fill="#7a7a7a"/><rect x="446" y="403" width="1" height="1" fill="#7a7a7a"/><rect x="452" y="403" width="1" height="1" fill="#7a7a7a"/><rect x="458" y="403" width="1" height="1" fill="#7a7a7a"/><rect x="464" y="403" width="1" height="1" fill="#7a7a7a"/><rect x="470" y="403" width="1" height="1" fill="#7a7a7a"/><rect x="476" y="403" width="1" height="1" fill="#7a7a7a"/><rect x="482" y="403" width="1" height="1" fill="#7a7a7a"/><rect x="488" y="403" width="1" height="1" fill="#7a7a7a"/><rect x="494" y="403" width="1" height="1" fill="#7a7a7a"/><rect x="500" y="403" width="1" height="1" fill="#7a7a7a"/><rect x="506" y="403" width="1" height="1" fill="#7a7a7a"/><rect x="512" y="403" width="1" height="1" fill="#7a7a7a"/><rect x="518" y="403" width="1" height="1" fill="#7a7a7a"/><rect x="524" y="403" width="1" height="1" fill="#7a7a7a"/><rect x="530" y="403" width="1" height="1" fill="#7a7a7a"/><rect x="536" y="403" width="1" height="1" fill="#7a7a7a"/><rect x="542" y="403" width="1" height="1" fill="#7a7a7a"/><rect x="548" y="403" width="1" height="1" fill="#7a7a7a"/><rect x="554" y="403" width="1" height="1" fill="#7a7a7a"/><rect x="560" y="403" width="1" height="1" fill="#7a7a7a"/><rect x="566" y="403" width="1" height="1" fill="#7a7a7a"/><rect x="572" y="403" width="1" height="1" fill="#7a7a7a"/><rect x="578" y="403" width="1" height="1" fill="#7a7a7a"/><rect x="584" y="403" width="1" height="1" fill="#7a7a7a"/><rect x="590" y="403" width="1" height="1" fill="#7a7a7a"/><rect x="596" y="403" width="1" height="1" fill="#7a7a7a"/><rect x="602" y="403" width="1" height="1" fill="#7a7a7a"/><rect x="608" y="403" width="1" height="1" fill="#7a7a7a"/><rect x="614" y="403" width="1" height="1" fill="#7a7a7a"/><rect x="620" y="403" width="1" height="1" fill="#7a7a7a"/><rect x="626" y="403" width="1" height="1" fill="#7a7a7a"/><rect x="632" y="403" width="1" height="1" fill="#7a7a7a"/><rect x="638" y="403" width="1" height="1" fill="#7a7a7a"/><rect x="644" y="403" width="1" height="1" fill="#7a7a7a"/><rect x="650" y="403" width="1" height="1" fill="#7a7a7a"/><rect x="656" y="403" width="1" height="1" fill="#7a7a7a"/><rect x="662" y="403" width="1" height="1" fill="#7a7a7a"/><rect x="668" y="403" width="1" height="1" fill="#7a7a7a"/><rect x="674" y="403" width="1" height="1" fill="#7a7a7a"/><rect x="680" y="403" width="1" height="1" fill="#7a7a7a"/><rect x="686" y="403" width="1" height="1" fill="#7a7a7a"/><rect x="692" y="403" width="1" height="1" fill="#7a7a7a"/><rect x="698" y="403" width="1" height="1" fill="#7a7a7a"/><rect x="704" y="403" width="1" height="1" fill="#7a7a7a"/><rect x="710" y="403" width="1" height="1" fill="#7a7a7a"/><rect x="716" y="403" width="1" height="1" fill="#7a7a7a"/><rect x="722" y="403" width="1" height="1" fill="#7a7a7a"/><rect x="728" y="403" width="1" height="1" fill="#7a7a7a"/><rect x="734" y="403" width="1" height="1" fill="#7a7a7a"/><rect x="740" y="403" width="1" height="1" fill="#7a7a7a"/><rect x="746" y="403" width="1" height="1" fill="#7a7a7a"/><rect x="752" y="403" width="1" height="1" fill="#7a7a7a"/><rect x="758" y="403" width="1" height="1" fill="#7a7a7a"/><rect x="764" y="403" width="1" height="1" fill="#7a7a7a"/><rect x="770" y="403" width="1" height="1" fill="#7a7a7a"/><rect x="776" y="403" width="1" height="1" fill="#7a7a7a"/><rect x="782" y="403" width="1" height="1" fill="#7a7a7a"/><rect x="788" y="403" width="1" height="1" fill="#7a7a7a"/><rect x="794" y="403" width="1" height="1" fill="#7a7a7a"/><rect x="800" y="403" width="1" height="1" fill="#7a7a7a"/><rect x="806" y="403" width="1" height="1" fill="#7a7a7a"/><rect x="812" y="403" width="1" height="1" fill="#7a7a7a"/><rect x="818" y="403" width="1" height="1" fill="#7a7a7a"/><rect x="824" y="403" width="1" height="1" fill="#7a7a7a"/><rect x="830" y="403" width="1" height="1" fill="#7a7a7a"/><rect x="836" y="403" width="1" height="1" fill="#7a7a7a"/><rect x="842" y="403" width="1" height="1" fill="#7a7a7a"/><rect x="848" y="403" width="1" height="1" fill="#7a7a7a"/><rect x="854" y="403" width="1" height="1" fill="#7a7a7a"/><rect x="860" y="403" width="1" height="1" fill="#7a7a7a"/><rect x="866" y="403" width="1" height="1" fill="#7a7a7a"/><rect x="872" y="403" width="1" height="1" fill="#7a7a7a"/><rect x="878" y="403" width="1" height="1" fill="#7a7a7a"/><rect x="884" y="403" width="1" height="1" fill="#7a7a7a"/><rect x="890" y="403" width="1" height="1" fill="#7a7a7a"/><rect x="896" y="403" width="1" height="1" fill="#7a7a7a"/><rect x="902" y="403" width="1" height="1" fill="#7a7a7a"/><rect x="908" y="403" width="1" height="1" fill="#7a7a7a"/><rect x="914" y="403" width="1" height="1" fill="#7a7a7a"/><rect x="920" y="403" width="1" height="1" fill="#7a7a7a"/><rect x="926" y="403" width="1" height="1" fill="#7a7a7a"/><rect x="932" y="403" width="1" height="1" fill="#7a7a7a"/><rect x="938" y="403" width="1" height="1" fill="#7a7a7a"/><rect x="338" y="435" width="1" height="1" fill="#7a7a7a"/><rect x="344" y="435" width="1" height="1" fill="#7a7a7a"/><rect x="350" y="435" width="1" height="1" fill="#7a7a7a"/><rect x="356" y="435" width="1" height="1" fill="#7a7a7a"/><rect x="362" y="435" width="1" height="1" fill="#7a7a7a"/><rect x="368" y="435" width="1" height="1" fill="#7a7a7a"/><rect x="374" y="435" width="1" height="1" fill="#7a7a7a"/><rect x="380" y="435" width="1" height="1" fill="#7a7a7a"/><rect x="386" y="435" width="1" height="1" fill="#7a7a7a"/><rect x="392" y="435" width="1" height="1" fill="#7a7a7a"/><rect x="398" y="435" width="1" height="1" fill="#7a7a7a"/><rect x="404" y="435" width="1" height="1" fill="#7a7a7a"/><rect x="410" y="435" width="1" height="1" fill="#7a7a7a"/><rect x="416" y="435" width="1" height="1" fill="#7a7a7a"/><rect x="422" y="435" width="1" height="1" fill="#7a7a7a"/><rect x="428" y="435" width="1" height="1" fill="#7a7a7a"/><rect x="434" y="435" width="1" height="1" fill="#7a7a7a"/><rect x="440" y="435" width="1" height="1" fill="#7a7a7a"/><rect x="446" y="435" width="1" height="1" fill="#7a7a7a"/><rect x="452" y="435" width="1" height="1" fill="#7a7a7a"/><rect x="458" y="435" width="1" height="1" fill="#7a7a7a"/><rect x="464" y="435" width="1" height="1" fill="#7a7a7a"/><rect x="470" y="435" width="1" height="1" fill="#7a7a7a"/><rect x="476" y="435" width="1" height="1" fill="#7a7a7a"/><rect x="482" y="435" width="1" height="1" fill="#7a7a7a"/><rect x="488" y="435" width="1" height="1" fill="#7a7a7a"/><rect x="494" y="435" width="1" height="1" fill="#7a7a7a"/><rect x="500" y="435" width="1" height="1" fill="#7a7a7a"/><rect x="506" y="435" width="1" height="1" fill="#7a7a7a"/><rect x="512" y="435" width="1" height="1" fill="#7a7a7a"/><rect x="518" y="435" width="1" height="1" fill="#7a7a7a"/><rect x="524" y="435" width="1" height="1" fill="#7a7a7a"/><rect x="530" y="435" width="1" height="1" fill="#7a7a7a"/><rect x="536" y="435" width="1" height="1" fill="#7a7a7a"/><rect x="542" y="435" width="1" height="1" fill="#7a7a7a"/><rect x="548" y="435" width="1" height="1" fill="#7a7a7a"/><rect x="554" y="435" width="1" height="1" fill="#7a7a7a"/><rect x="560" y="435" width="1" height="1" fill="#7a7a7a"/><rect x="566" y="435" width="1" height="1" fill="#7a7a7a"/><rect x="572" y="435" width="1" height="1" fill="#7a7a7a"/><rect x="578" y="435" width="1" height="1" fill="#7a7a7a"/><rect x="584" y="435" width="1" height="1" fill="#7a7a7a"/><rect x="590" y="435" width="1" height="1" fill="#7a7a7a"/><rect x="596" y="435" width="1" height="1" fill="#7a7a7a"/><rect x="602" y="435" width="1" height="1" fill="#7a7a7a"/><rect x="608" y="435" width="1" height="1" fill="#7a7a7a"/><rect x="614" y="435" width="1" height="1" fill="#7a7a7a"/><rect x="620" y="435" width="1" height="1" fill="#7a7a7a"/><rect x="626" y="435" width="1" height="1" fill="#7a7a7a"/><rect x="632" y="435" width="1" height="1" fill="#7a7a7a"/><rect x="638" y="435" width="1" height="1" fill="#7a7a7a"/><rect x="644" y="435" width="1" height="1" fill="#7a7a7a"/><rect x="650" y="435" width="1" height="1" fill="#7a7a7a"/><rect x="656" y="435" width="1" height="1" fill="#7a7a7a"/><rect x="662" y="435" width="1" height="1" fill="#7a7a7a"/><rect x="668" y="435" width="1" height="1" fill="#7a7a7a"/><rect x="674" y="435" width="1" height="1" fill="#7a7a7a"/><rect x="680" y="435" width="1" height="1" fill="#7a7a7a"/><rect x="686" y="435" width="1" height="1" fill="#7a7a7a"/><rect x="692" y="435" width="1" height="1" fill="#7a7a7a"/><rect x="698" y="435" width="1" height="1" fill="#7a7a7a"/><rect x="704" y="435" width="1" height="1" fill="#7a7a7a"/><rect x="710" y="435" width="1" height="1" fill="#7a7a7a"/><rect x="716" y="435" width="1" height="1" fill="#7a7a7a"/><rect x="722" y="435" width="1" height="1" fill="#7a7a7a"/><rect x="728" y="435" width="1" height="1" fill="#7a7a7a"/><rect x="734" y="435" width="1" height="1" fill="#7a7a7a"/><rect x="740" y="435" width="1" height="1" fill="#7a7a7a"/><rect x="746" y="435" width="1" height="1" fill="#7a7a7a"/><rect x="752" y="435" width="1" height="1" fill="#7a7a7a"/><rect x="758" y="435" width="1" height="1" fill="#7a7a7a"/><rect x="764" y="435" width="1" height="1" fill="#7a7a7a"/><rect x="770" y="435" width="1" height="1" fill="#7a7a7a"/><rect x="776" y="435" width="1" height="1" fill="#7a7a7a"/><rect x="782" y="435" width="1" height="1" fill="#7a7a7a"/><rect x="788" y="435" width="1" height="1" fill="#7a7a7a"/><rect x="794" y="435" width="1" height="1" fill="#7a7a7a"/><rect x="800" y="435" width="1" height="1" fill="#7a7a7a"/><rect x="806" y="435" width="1" height="1" fill="#7a7a7a"/><rect x="812" y="435" width="1" height="1" fill="#7a7a7a"/><rect x="818" y="435" width="1" height="1" fill="#7a7a7a"/><rect x="824" y="435" width="1" height="1" fill="#7a7a7a"/><rect x="830" y="435" width="1" height="1" fill="#7a7a7a"/><rect x="836" y="435" width="1" height="1" fill="#7a7a7a"/><rect x="842" y="435" width="1" height="1" fill="#7a7a7a"/><rect x="848" y="435" width="1" height="1" fill="#7a7a7a"/><rect x="854" y="435" width="1" height="1" fill="#7a7a7a"/><rect x="860" y="435" width="1" height="1" fill="#7a7a7a"/><rect x="866" y="435" width="1" height="1" fill="#7a7a7a"/><rect x="872" y="435" width="1" height="1" fill="#7a7a7a"/><rect x="878" y="435" width="1" height="1" fill="#7a7a7a"/><rect x="884" y="435" width="1" height="1" fill="#7a7a7a"/><rect x="890" y="435" width="1" height="1" fill="#7a7a7a"/><rect x="896" y="435" width="1" height="1" fill="#7a7a7a"/><rect x="902" y="435" width="1" height="1" fill="#7a7a7a"/><rect x="908" y="435" width="1" height="1" fill="#7a7a7a"/><rect x="914" y="435" width="1" height="1" fill="#7a7a7a"/><rect x="920" y="435" width="1" height="1" fill="#7a7a7a"/><rect x="926" y="435" width="1" height="1" fill="#7a7a7a"/><rect x="932" y="435" width="1" height="1" fill="#7a7a7a"/><rect x="938" y="435" width="1" height="1" fill="#7a7a7a"/><rect x="338" y="467" width="1" height="1" fill="#7a7a7a"/><rect x="344" y="467" width="1" height="1" fill="#7a7a7a"/><rect x="350" y="467" width="1" height="1" fill="#7a7a7a"/><rect x="356" y="467" width="1" height="1" fill="#7a7a7a"/><rect x="362" y="467" width="1" height="1" fill="#7a7a7a"/><rect x="368" y="467" width="1" height="1" fill="#7a7a7a"/><rect x="374" y="467" width="1" height="1" fill="#7a7a7a"/><rect x="380" y="467" width="1" height="1" fill="#7a7a7a"/><rect x="386" y="467" width="1" height="1" fill="#7a7a7a"/><rect x="392" y="467" width="1" height="1" fill="#7a7a7a"/><rect x="398" y="467" width="1" height="1" fill="#7a7a7a"/><rect x="404" y="467" width="1" height="1" fill="#7a7a7a"/><rect x="410" y="467" width="1" height="1" fill="#7a7a7a"/><rect x="416" y="467" width="1" height="1" fill="#7a7a7a"/><rect x="422" y="467" width="1" height="1" fill="#7a7a7a"/><rect x="428" y="467" width="1" height="1" fill="#7a7a7a"/><rect x="434" y="467" width="1" height="1" fill="#7a7a7a"/><rect x="440" y="467" width="1" height="1" fill="#7a7a7a"/><rect x="446" y="467" width="1" height="1" fill="#7a7a7a"/><rect x="452" y="467" width="1" height="1" fill="#7a7a7a"/><rect x="458" y="467" width="1" height="1" fill="#7a7a7a"/><rect x="464" y="467" width="1" height="1" fill="#7a7a7a"/><rect x="470" y="467" width="1" height="1" fill="#7a7a7a"/><rect x="476" y="467" width="1" height="1" fill="#7a7a7a"/><rect x="482" y="467" width="1" height="1" fill="#7a7a7a"/><rect x="488" y="467" width="1" height="1" fill="#7a7a7a"/><rect x="494" y="467" width="1" height="1" fill="#7a7a7a"/><rect x="500" y="467" width="1" height="1" fill="#7a7a7a"/><rect x="506" y="467" width="1" height="1" fill="#7a7a7a"/><rect x="512" y="467" width="1" height="1" fill="#7a7a7a"/><rect x="518" y="467" width="1" height="1" fill="#7a7a7a"/><rect x="524" y="467" width="1" height="1" fill="#7a7a7a"/><rect x="530" y="467" width="1" height="1" fill="#7a7a7a"/><rect x="536" y="467" width="1" height="1" fill="#7a7a7a"/><rect x="542" y="467" width="1" height="1" fill="#7a7a7a"/><rect x="548" y="467" width="1" height="1" fill="#7a7a7a"/><rect x="554" y="467" width="1" height="1" fill="#7a7a7a"/><rect x="560" y="467" width="1" height="1" fill="#7a7a7a"/><rect x="566" y="467" width="1" height="1" fill="#7a7a7a"/><rect x="572" y="467" width="1" height="1" fill="#7a7a7a"/><rect x="578" y="467" width="1" height="1" fill="#7a7a7a"/><rect x="584" y="467" width="1" height="1" fill="#7a7a7a"/><rect x="590" y="467" width="1" height="1" fill="#7a7a7a"/><rect x="596" y="467" width="1" height="1" fill="#7a7a7a"/><rect x="602" y="467" width="1" height="1" fill="#7a7a7a"/><rect x="608" y="467" width="1" height="1" fill="#7a7a7a"/><rect x="614" y="467" width="1" height="1" fill="#7a7a7a"/><rect x="620" y="467" width="1" height="1" fill="#7a7a7a"/><rect x="626" y="467" width="1" height="1" fill="#7a7a7a"/><rect x="632" y="467" width="1" height="1" fill="#7a7a7a"/><rect x="638" y="467" width="1" height="1" fill="#7a7a7a"/><rect x="644" y="467" width="1" height="1" fill="#7a7a7a"/><rect x="650" y="467" width="1" height="1" fill="#7a7a7a"/><rect x="656" y="467" width="1" height="1" fill="#7a7a7a"/><rect x="662" y="467" width="1" height="1" fill="#7a7a7a"/><rect x="668" y="467" width="1" height="1" fill="#7a7a7a"/><rect x="674" y="467" width="1" height="1" fill="#7a7a7a"/><rect x="680" y="467" width="1" height="1" fill="#7a7a7a"/><rect x="686" y="467" width="1" height="1" fill="#7a7a7a"/><rect x="692" y="467" width="1" height="1" fill="#7a7a7a"/><rect x="698" y="467" width="1" height="1" fill="#7a7a7a"/><rect x="704" y="467" width="1" height="1" fill="#7a7a7a"/><rect x="710" y="467" width="1" height="1" fill="#7a7a7a"/><rect x="716" y="467" width="1" height="1" fill="#7a7a7a"/><rect x="722" y="467" width="1" height="1" fill="#7a7a7a"/><rect x="728" y="467" width="1" height="1" fill="#7a7a7a"/><rect x="734" y="467" width="1" height="1" fill="#7a7a7a"/><rect x="740" y="467" width="1" height="1" fill="#7a7a7a"/><rect x="746" y="467" width="1" height="1" fill="#7a7a7a"/><rect x="752" y="467" width="1" height="1" fill="#7a7a7a"/><rect x="758" y="467" width="1" height="1" fill="#7a7a7a"/><rect x="764" y="467" width="1" height="1" fill="#7a7a7a"/><rect x="770" y="467" width="1" height="1" fill="#7a7a7a"/><rect x="776" y="467" width="1" height="1" fill="#7a7a7a"/><rect x="782" y="467" width="1" height="1" fill="#7a7a7a"/><rect x="788" y="467" width="1" height="1" fill="#7a7a7a"/><rect x="794" y="467" width="1" height="1" fill="#7a7a7a"/><rect x="800" y="467" width="1" height="1" fill="#7a7a7a"/><rect x="806" y="467" width="1" height="1" fill="#7a7a7a"/><rect x="812" y="467" width="1" height="1" fill="#7a7a7a"/><rect x="818" y="467" width="1" height="1" fill="#7a7a7a"/><rect x="824" y="467" width="1" height="1" fill="#7a7a7a"/><rect x="830" y="467" width="1" height="1" fill="#7a7a7a"/><rect x="836" y="467" width="1" height="1" fill="#7a7a7a"/><rect x="842" y="467" width="1" height="1" fill="#7a7a7a"/><rect x="848" y="467" width="1" height="1" fill="#7a7a7a"/><rect x="854" y="467" width="1" height="1" fill="#7a7a7a"/><rect x="860" y="467" width="1" height="1" fill="#7a7a7a"/><rect x="866" y="467" width="1" height="1" fill="#7a7a7a"/><rect x="872" y="467" width="1" height="1" fill="#7a7a7a"/><rect x="878" y="467" width="1" height="1" fill="#7a7a7a"/><rect x="884" y="467" width="1" height="1" fill="#7a7a7a"/><rect x="890" y="467" width="1" height="1" fill="#7a7a7a"/><rect x="896" y="467" width="1" height="1" fill="#7a7a7a"/><rect x="902" y="467" width="1" height="1" fill="#7a7a7a"/><rect x="908" y="467" width="1" height="1" fill="#7a7a7a"/><rect x="914" y="467" width="1" height="1" fill="#7a7a7a"/><rect x="920" y="467" width="1" height="1" fill="#7a7a7a"/><rect x="926" y="467" width="1" height="1" fill="#7a7a7a"/><rect x="932" y="467" width="1" height="1" fill="#7a7a7a"/><rect x="938" y="467" width="1" height="1" fill="#7a7a7a"/><rect x="338" y="498" width="1" height="1" fill="#7a7a7a"/><rect x="344" y="498" width="1" height="1" fill="#7a7a7a"/><rect x="350" y="498" width="1" height="1" fill="#7a7a7a"/><rect x="356" y="498" width="1" height="1" fill="#7a7a7a"/><rect x="362" y="498" width="1" height="1" fill="#7a7a7a"/><rect x="368" y="498" width="1" height="1" fill="#7a7a7a"/><rect x="374" y="498" width="1" height="1" fill="#7a7a7a"/><rect x="380" y="498" width="1" height="1" fill="#7a7a7a"/><rect x="386" y="498" width="1" height="1" fill="#7a7a7a"/><rect x="392" y="498" width="1" height="1" fill="#7a7a7a"/><rect x="398" y="498" width="1" height="1" fill="#7a7a7a"/><rect x="404" y="498" width="1" height="1" fill="#7a7a7a"/><rect x="410" y="498" width="1" height="1" fill="#7a7a7a"/><rect x="416" y="498" width="1" height="1" fill="#7a7a7a"/><rect x="422" y="498" width="1" height="1" fill="#7a7a7a"/><rect x="428" y="498" width="1" height="1" fill="#7a7a7a"/><rect x="434" y="498" width="1" height="1" fill="#7a7a7a"/><rect x="440" y="498" width="1" height="1" fill="#7a7a7a"/><rect x="446" y="498" width="1" height="1" fill="#7a7a7a"/><rect x="452" y="498" width="1" height="1" fill="#7a7a7a"/><rect x="458" y="498" width="1" height="1" fill="#7a7a7a"/><rect x="464" y="498" width="1" height="1" fill="#7a7a7a"/><rect x="470" y="498" width="1" height="1" fill="#7a7a7a"/><rect x="476" y="498" width="1" height="1" fill="#7a7a7a"/><rect x="482" y="498" width="1" height="1" fill="#7a7a7a"/><rect x="488" y="498" width="1" height="1" fill="#7a7a7a"/><rect x="494" y="498" width="1" height="1" fill="#7a7a7a"/><rect x="500" y="498" width="1" height="1" fill="#7a7a7a"/><rect x="506" y="498" width="1" height="1" fill="#7a7a7a"/><rect x="512" y="498" width="1" height="1" fill="#7a7a7a"/><rect x="518" y="498" width="1" height="1" fill="#7a7a7a"/><rect x="524" y="498" width="1" height="1" fill="#7a7a7a"/><rect x="530" y="498" width="1" height="1" fill="#7a7a7a"/><rect x="536" y="498" width="1" height="1" fill="#7a7a7a"/><rect x="542" y="498" width="1" height="1" fill="#7a7a7a"/><rect x="548" y="498" width="1" height="1" fill="#7a7a7a"/><rect x="554" y="498" width="1" height="1" fill="#7a7a7a"/><rect x="560" y="498" width="1" height="1" fill="#7a7a7a"/><rect x="566" y="498" width="1" height="1" fill="#7a7a7a"/><rect x="572" y="498" width="1" height="1" fill="#7a7a7a"/><rect x="578" y="498" width="1" height="1" fill="#7a7a7a"/><rect x="584" y="498" width="1" height="1" fill="#7a7a7a"/><rect x="590" y="498" width="1" height="1" fill="#7a7a7a"/><rect x="596" y="498" width="1" height="1" fill="#7a7a7a"/><rect x="602" y="498" width="1" height="1" fill="#7a7a7a"/><rect x="608" y="498" width="1" height="1" fill="#7a7a7a"/><rect x="614" y="498" width="1" height="1" fill="#7a7a7a"/><rect x="620" y="498" width="1" height="1" fill="#7a7a7a"/><rect x="626" y="498" width="1" height="1" fill="#7a7a7a"/><rect x="632" y="498" width="1" height="1" fill="#7a7a7a"/><rect x="638" y="498" width="1" height="1" fill="#7a7a7a"/><rect x="644" y="498" width="1" height="1" fill="#7a7a7a"/><rect x="650" y="498" width="1" height="1" fill="#7a7a7a"/><rect x="656" y="498" width="1" height="1" fill="#7a7a7a"/><rect x="662" y="498" width="1" height="1" fill="#7a7a7a"/><rect x="668" y="498" width="1" height="1" fill="#7a7a7a"/><rect x="674" y="498" width="1" height="1" fill="#7a7a7a"/><rect x="680" y="498" width="1" height="1" fill="#7a7a7a"/><rect x="686" y="498" width="1" height="1" fill="#7a7a7a"/><rect x="692" y="498" width="1" height="1" fill="#7a7a7a"/><rect x="698" y="498" width="1" height="1" fill="#7a7a7a"/><rect x="704" y="498" width="1" height="1" fill="#7a7a7a"/><rect x="710" y="498" width="1" height="1" fill="#7a7a7a"/><rect x="716" y="498" width="1" height="1" fill="#7a7a7a"/><rect x="722" y="498" width="1" height="1" fill="#7a7a7a"/><rect x="728" y="498" width="1" height="1" fill="#7a7a7a"/><rect x="734" y="498" width="1" height="1" fill="#7a7a7a"/><rect x="740" y="498" width="1" height="1" fill="#7a7a7a"/><rect x="746" y="498" width="1" height="1" fill="#7a7a7a"/><rect x="752" y="498" width="1" height="1" fill="#7a7a7a"/><rect x="758" y="498" width="1" height="1" fill="#7a7a7a"/><rect x="764" y="498" width="1" height="1" fill="#7a7a7a"/><rect x="770" y="498" width="1" height="1" fill="#7a7a7a"/><rect x="776" y="498" width="1" height="1" fill="#7a7a7a"/><rect x="782" y="498" width="1" height="1" fill="#7a7a7a"/><rect x="788" y="498" width="1" height="1" fill="#7a7a7a"/><rect x="794" y="498" width="1" height="1" fill="#7a7a7a"/><rect x="800" y="498" width="1" height="1" fill="#7a7a7a"/><rect x="806" y="498" width="1" height="1" fill="#7a7a7a"/><rect x="812" y="498" width="1" height="1" fill="#7a7a7a"/><rect x="818" y="498" width="1" height="1" fill="#7a7a7a"/><rect x="824" y="498" width="1" height="1" fill="#7a7a7a"/><rect x="830" y="498" width="1" height="1" fill="#7a7a7a"/><rect x="836" y="498" width="1" height="1" fill="#7a7a7a"/><rect x="842" y="498" width="1" height="1" fill="#7a7a7a"/><rect x="848" y="498" width="1" height="1" fill="#7a7a7a"/><rect x="854" y="498" width="1" height="1" fill="#7a7a7a"/><rect x="860" y="498" width="1" height="1" fill="#7a7a7a"/><rect x="866" y="498" width="1" height="1" fill="#7a7a7a"/><rect x="872" y="498" width="1" height="1" fill="#7a7a7a"/><rect x="878" y="498" width="1" height="1" fill="#7a7a7a"/><rect x="884" y="498" width="1" height="1" fill="#7a7a7a"/><rect x="890" y="498" width="1" height="1" fill="#7a7a7a"/><rect x="896" y="498" width="1" height="1" fill="#7a7a7a"/><rect x="902" y="498" width="1" height="1" fill="#7a7a7a"/><rect x="908" y="498" width="1" height="1" fill="#7a7a7a"/><rect x="914" y="498" width="1" height="1" fill="#7a7a7a"/><rect x="920" y="498" width="1" height="1" fill="#7a7a7a"/><rect x="926" y="498" width="1" height="1" fill="#7a7a7a"/><rect x="932" y="498" width="1" height="1" fill="#7a7a7a"/><rect x="938" y="498" width="1" height="1" fill="#7a7a7a"/><rect x="468" y="344" width="1" height="1" fill="#7a7a7a"/><rect x="468" y="350" width="1" height="1" fill="#7a7a7a"/><rect x="468" y="356" width="1" height="1" fill="#7a7a7a"/><rect x="468" y="362" width="1" height="1" fill="#7a7a7a"/><rect x="468" y="368" width="1" height="1" fill="#7a7a7a"/><rect x="468" y="374" width="1" height="1" fill="#7a7a7a"/><rect x="468" y="380" width="1" height="1" fill="#7a7a7a"/><rect x="468" y="386" width="1" height="1" fill="#7a7a7a"/><rect x="468" y="392" width="1" height="1" fill="#7a7a7a"/><rect x="468" y="398" width="1" height="1" fill="#7a7a7a"/><rect x="468" y="404" width="1" height="1" fill="#7a7a7a"/><rect x="468" y="410" width="1" height="1" fill="#7a7a7a"/><rect x="468" y="416" width="1" height="1" fill="#7a7a7a"/><rect x="468" y="422" width="1" height="1" fill="#7a7a7a"/><rect x="468" y="428" width="1" height="1" fill="#7a7a7a"/><rect x="468" y="434" width="1" height="1" fill="#7a7a7a"/><rect x="468" y="440" width="1" height="1" fill="#7a7a7a"/><rect x="468" y="446" width="1" height="1" fill="#7a7a7a"/><rect x="468" y="452" width="1" height="1" fill="#7a7a7a"/><rect x="468" y="458" width="1" height="1" fill="#7a7a7a"/><rect x="468" y="464" width="1" height="1" fill="#7a7a7a"/><rect x="468" y="470" width="1" height="1" fill="#7a7a7a"/><rect x="468" y="476" width="1" height="1" fill="#7a7a7a"/><rect x="468" y="482" width="1" height="1" fill="#7a7a7a"/><rect x="468" y="488" width="1" height="1" fill="#7a7a7a"/><rect x="468" y="494" width="1" height="1" fill="#7a7a7a"/><rect x="468" y="500" width="1" height="1" fill="#7a7a7a"/><rect x="468" y="506" width="1" height="1" fill="#7a7a7a"/><rect x="468" y="512" width="1" height="1" fill="#7a7a7a"/><rect x="468" y="518" width="1" height="1" fill="#7a7a7a"/><rect x="468" y="524" width="1" height="1" fill="#7a7a7a"/><rect x="603" y="344" width="1" height="1" fill="#7a7a7a"/><rect x="603" y="350" width="1" height="1" fill="#7a7a7a"/><rect x="603" y="356" width="1" height="1" fill="#7a7a7a"/><rect x="603" y="362" width="1" height="1" fill="#7a7a7a"/><rect x="603" y="368" width="1" height="1" fill="#7a7a7a"/><rect x="603" y="374" width="1" height="1" fill="#7a7a7a"/><rect x="603" y="380" width="1" height="1" fill="#7a7a7a"/><rect x="603" y="386" width="1" height="1" fill="#7a7a7a"/><rect x="603" y="392" width="1" height="1" fill="#7a7a7a"/><rect x="603" y="398" width="1" height="1" fill="#7a7a7a"/><rect x="603" y="404" width="1" height="1" fill="#7a7a7a"/><rect x="603" y="410" width="1" height="1" fill="#7a7a7a"/><rect x="603" y="416" width="1" height="1" fill="#7a7a7a"/><rect x="603" y="422" width="1" height="1" fill="#7a7a7a"/><rect x="603" y="428" width="1" height="1" fill="#7a7a7a"/><rect x="603" y="434" width="1" height="1" fill="#7a7a7a"/><rect x="603" y="440" width="1" height="1" fill="#7a7a7a"/><rect x="603" y="446" width="1" height="1" fill="#7a7a7a"/><rect x="603" y="452" width="1" height="1" fill="#7a7a7a"/><rect x="603" y="458" width="1" height="1" fill="#7a7a7a"/><rect x="603" y="464" width="1" height="1" fill="#7a7a7a"/><rect x="603" y="470" width="1" height="1" fill="#7a7a7a"/><rect x="603" y="476" width="1" height="1" fill="#7a7a7a"/><rect x="603" y="482" width="1" height="1" fill="#7a7a7a"/><rect x="603" y="488" width="1" height="1" fill="#7a7a7a"/><rect x="603" y="494" width="1" height="1" fill="#7a7a7a"/><rect x="603" y="500" width="1" height="1" fill="#7a7a7a"/><rect x="603" y="506" width="1" height="1" fill="#7a7a7a"/><rect x="603" y="512" width="1" height="1" fill="#7a7a7a"/><rect x="603" y="518" width="1" height="1" fill="#7a7a7a"/><rect x="603" y="524" width="1" height="1" fill="#7a7a7a"/><rect x="738" y="344" width="1" height="1" fill="#7a7a7a"/><rect x="738" y="350" width="1" height="1" fill="#7a7a7a"/><rect x="738" y="356" width="1" height="1" fill="#7a7a7a"/><rect x="738" y="362" width="1" height="1" fill="#7a7a7a"/><rect x="738" y="368" width="1" height="1" fill="#7a7a7a"/><rect x="738" y="374" width="1" height="1" fill="#7a7a7a"/><rect x="738" y="380" width="1" height="1" fill="#7a7a7a"/><rect x="738" y="386" width="1" height="1" fill="#7a7a7a"/><rect x="738" y="392" width="1" height="1" fill="#7a7a7a"/><rect x="738" y="398" width="1" height="1" fill="#7a7a7a"/><rect x="738" y="404" width="1" height="1" fill="#7a7a7a"/><rect x="738" y="410" width="1" height="1" fill="#7a7a7a"/><rect x="738" y="416" width="1" height="1" fill="#7a7a7a"/><rect x="738" y="422" width="1" height="1" fill="#7a7a7a"/><rect x="738" y="428" width="1" height="1" fill="#7a7a7a"/><rect x="738" y="434" width="1" height="1" fill="#7a7a7a"/><rect x="738" y="440" width="1" height="1" fill="#7a7a7a"/><rect x="738" y="446" width="1" height="1" fill="#7a7a7a"/><rect x="738" y="452" width="1" height="1" fill="#7a7a7a"/><rect x="738" y="458" width="1" height="1" fill="#7a7a7a"/><rect x="738" y="464" width="1" height="1" fill="#7a7a7a"/><rect x="738" y="470" width="1" height="1" fill="#7a7a7a"/><rect x="738" y="476" width="1" height="1" fill="#7a7a7a"/><rect x="738" y="482" width="1" height="1" fill="#7a7a7a"/><rect x="738" y="488" width="1" height="1" fill="#7a7a7a"/><rect x="738" y="494" width="1" height="1" fill="#7a7a7a"/><rect x="738" y="500" width="1" height="1" fill="#7a7a7a"/><rect x="738" y="506" width="1" height="1" fill="#7a7a7a"/><rect x="738" y="512" width="1" height="1" fill="#7a7a7a"/><rect x="738" y="518" width="1" height="1" fill="#7a7a7a"/><rect x="738" y="524" width="1" height="1" fill="#7a7a7a"/><rect x="874" y="344" width="1" height="1" fill="#7a7a7a"/><rect x="874" y="350" width="1" height="1" fill="#7a7a7a"/><rect x="874" y="356" width="1" height="1" fill="#7a7a7a"/><rect x="874" y="362" width="1" height="1" fill="#7a7a7a"/><rect x="874" y="368" width="1" height="1" fill="#7a7a7a"/><rect x="874" y="374" width="1" height="1" fill="#7a7a7a"/><rect x="874" y="380" width="1" height="1" fill="#7a7a7a"/><rect x="874" y="386" width="1" height="1" fill="#7a7a7a"/><rect x="874" y="392" width="1" height="1" fill="#7a7a7a"/><rect x="874" y="398" width="1" height="1" fill="#7a7a7a"/><rect x="874" y="404" width="1" height="1" fill="#7a7a7a"/><rect x="874" y="410" width="1" height="1" fill="#7a7a7a"/><rect x="874" y="416" width="1" height="1" fill="#7a7a7a"/><rect x="874" y="422" width="1" height="1" fill="#7a7a7a"/><rect x="874" y="428" width="1" height="1" fill="#7a7a7a"/><rect x="874" y="434" width="1" height="1" fill="#7a7a7a"/><rect x="874" y="440" width="1" height="1" fill="#7a7a7a"/><rect x="874" y="446" width="1" height="1" fill="#7a7a7a"/><rect x="874" y="452" width="1" height="1" fill="#7a7a7a"/><rect x="874" y="458" width="1" height="1" fill="#7a7a7a"/><rect x="874" y="464" width="1" height="1" fill="#7a7a7a"/><rect x="874" y="470" width="1" height="1" fill="#7a7a7a"/><rect x="874" y="476" width="1" height="1" fill="#7a7a7a"/><rect x="874" y="482" width="1" height="1" fill="#7a7a7a"/><rect x="874" y="488" width="1" height="1" fill="#7a7a7a"/><rect x="874" y="494" width="1" height="1" fill="#7a7a7a"/><rect x="874" y="500" width="1" height="1" fill="#7a7a7a"/><rect x="874" y="506" width="1" height="1" fill="#7a7a7a"/><rect x="874" y="512" width="1" height="1" fill="#7a7a7a"/><rect x="874" y="518" width="1" height="1" fill="#7a7a7a"/><rect x="874" y="524" width="1" height="1" fill="#7a7a7a"/><rect x="330" y="339" width="612" height="1" fill="#000"/><rect x="329" y="530" width="613" height="1" fill="#000"/><rect x="332" y="339" width="1" height="195" fill="#000"/><rect x="941" y="339" width="1" height="192" fill="#000"/><rect x="330" y="339" width="6" height="1" fill="#000"/><rect x="938" y="339" width="3" height="1" fill="#000"/><rect x="331" y="347" width="3" height="1" fill="#000"/><rect x="939" y="347" width="2" height="1" fill="#000"/><rect x="331" y="355" width="3" height="1" fill="#000"/><rect x="939" y="355" width="2" height="1" fill="#000"/><rect x="331" y="363" width="3" height="1" fill="#000"/><rect x="939" y="363" width="2" height="1" fill="#000"/><rect x="330" y="371" width="6" height="1" fill="#000"/><rect x="938" y="371" width="3" height="1" fill="#000"/><rect x="331" y="379" width="3" height="1" fill="#000"/><rect x="939" y="379" width="2" height="1" fill="#000"/><rect x="331" y="387" width="3" height="1" fill="#000"/><rect x="939" y="387" width="2" height="1" fill="#000"/><rect x="331" y="395" width="3" height="1" fill="#000"/><rect x="939" y="395" width="2" height="1" fill="#000"/><rect x="330" y="403" width="6" height="1" fill="#000"/><rect x="938" y="403" width="3" height="1" fill="#000"/><rect x="331" y="411" width="3" height="1" fill="#000"/><rect x="939" y="411" width="2" height="1" fill="#000"/><rect x="331" y="419" width="3" height="1" fill="#000"/><rect x="939" y="419" width="2" height="1" fill="#000"/><rect x="331" y="427" width="3" height="1" fill="#000"/><rect x="939" y="427" width="2" height="1" fill="#000"/><rect x="330" y="435" width="6" height="1" fill="#000"/><rect x="938" y="435" width="3" height="1" fill="#000"/><rect x="331" y="443" width="3" height="1" fill="#000"/><rect x="939" y="443" width="2" height="1" fill="#000"/><rect x="331" y="451" width="3" height="1" fill="#000"/><rect x="939" y="451" width="2" height="1" fill="#000"/><rect x="331" y="459" width="3" height="1" fill="#000"/><rect x="939" y="459" width="2" height="1" fill="#000"/><rect x="330" y="467" width="6" height="1" fill="#000"/><rect x="938" y="467" width="3" height="1" fill="#000"/><rect x="331" y="475" width="3" height="1" fill="#000"/><rect x="939" y="475" width="2" height="1" fill="#000"/><rect x="331" y="483" width="3" height="1" fill="#000"/><rect x="939" y="483" width="2" height="1" fill="#000"/><rect x="331" y="490" width="3" height="1" fill="#000"/><rect x="939" y="490" width="2" height="1" fill="#000"/><rect x="330" y="498" width="6" height="1" fill="#000"/><rect x="938" y="498" width="3" height="1" fill="#000"/><rect x="331" y="506" width="3" height="1" fill="#000"/><rect x="939" y="506" width="2" height="1" fill="#000"/><rect x="331" y="514" width="3" height="1" fill="#000"/><rect x="939" y="514" width="2" height="1" fill="#000"/><rect x="331" y="522" width="3" height="1" fill="#000"/><rect x="939" y="522" width="2" height="1" fill="#000"/><rect x="330" y="530" width="6" height="1" fill="#000"/><rect x="938" y="530" width="3" height="1" fill="#000"/><rect x="332" y="527" width="1" height="7" fill="#000"/><rect x="332" y="339" width="1" height="4" fill="#000"/><rect x="355" y="529" width="1" height="3" fill="#000"/><rect x="355" y="339" width="1" height="3" fill="#000"/><rect x="377" y="529" width="1" height="3" fill="#000"/><rect x="377" y="339" width="1" height="3" fill="#000"/><rect x="400" y="529" width="1" height="3" fill="#000"/><rect x="400" y="339" width="1" height="3" fill="#000"/><rect x="422" y="529" width="1" height="3" fill="#000"/><rect x="422" y="339" width="1" height="3" fill="#000"/><rect x="445" y="529" width="1" height="3" fill="#000"/><rect x="445" y="339" width="1" height="3" fill="#000"/><rect x="468" y="527" width="1" height="7" fill="#000"/><rect x="468" y="339" width="1" height="4" fill="#000"/><rect x="490" y="529" width="1" height="3" fill="#000"/><rect x="490" y="339" width="1" height="3" fill="#000"/><rect x="513" y="529" width="1" height="3" fill="#000"/><rect x="513" y="339" width="1" height="3" fill="#000"/><rect x="535" y="529" width="1" height="3" fill="#000"/><rect x="535" y="339" width="1" height="3" fill="#000"/><rect x="558" y="529" width="1" height="3" fill="#000"/><rect x="558" y="339" width="1" height="3" fill="#000"/><rect x="580" y="529" width="1" height="3" fill="#000"/><rect x="580" y="339" width="1" height="3" fill="#000"/><rect x="603" y="527" width="1" height="7" fill="#000"/><rect x="603" y="339" width="1" height="4" fill="#000"/><rect x="625" y="529" width="1" height="3" fill="#000"/><rect x="625" y="339" width="1" height="3" fill="#000"/><rect x="648" y="529" width="1" height="3" fill="#000"/><rect x="648" y="339" width="1" height="3" fill="#000"/><rect x="671" y="529" width="1" height="3" fill="#000"/><rect x="671" y="339" width="1" height="3" fill="#000"/><rect x="693" y="529" width="1" height="3" fill="#000"/><rect x="693" y="339" width="1" height="3" fill="#000"/><rect x="716" y="529" width="1" height="3" fill="#000"/><rect x="716" y="339" width="1" height="3" fill="#000"/><rect x="738" y="527" width="1" height="7" fill="#000"/><rect x="738" y="339" width="1" height="4" fill="#000"/><rect x="761" y="529" width="1" height="3" fill="#000"/><rect x="761" y="339" width="1" height="3" fill="#000"/><rect x="783" y="529" width="1" height="3" fill="#000"/><rect x="783" y="339" width="1" height="3" fill="#000"/><rect x="806" y="529" width="1" height="3" fill="#000"/><rect x="806" y="339" width="1" height="3" fill="#000"/><rect x="828" y="529" width="1" height="3" fill="#000"/><rect x="828" y="339" width="1" height="3" fill="#000"/><rect x="851" y="529" width="1" height="3" fill="#000"/><rect x="851" y="339" width="1" height="3" fill="#000"/><rect x="874" y="527" width="1" height="7" fill="#000"/><rect x="874" y="339" width="1" height="4" fill="#000"/><rect x="896" y="529" width="1" height="3" fill="#000"/><rect x="896" y="339" width="1" height="3" fill="#000"/><rect x="919" y="529" width="1" height="3" fill="#000"/><rect x="919" y="339" width="1" height="3" fill="#000"/></svg>
<div class="t" style="left:314px;top:327.62px;font-size:8.6px;color:#000;letter-spacing:-0.7px">1.2</div>
<div class="t" style="left:314px;top:359.62px;font-size:8.6px;color:#000;letter-spacing:-0.7px">1.0</div>
<div class="t" style="left:314px;top:391.62px;font-size:8.6px;color:#000;letter-spacing:-0.7px">0.8</div>
<div class="t" style="left:314px;top:423.62px;font-size:8.6px;color:#000;letter-spacing:-0.7px">0.6</div>
<div class="t" style="left:314px;top:455.62px;font-size:8.6px;color:#000;letter-spacing:-0.7px">0.4</div>
<div class="t" style="left:314px;top:486.62px;font-size:8.6px;color:#000;letter-spacing:-0.7px">0.2</div>
<div class="t" style="left:314px;top:518.62px;font-size:8.6px;color:#000;letter-spacing:-0.7px">0.0</div>
<div class="t" style="left:322.7px;top:529.62px;font-size:8.6px;color:#000;letter-spacing:-0.75px">00:00</div>
<div class="t" style="left:458.7px;top:529.62px;font-size:8.6px;color:#000;letter-spacing:-0.75px">06:00</div>
<div class="t" style="left:593.7px;top:529.62px;font-size:8.6px;color:#000;letter-spacing:-0.75px">12:00</div>
<div class="t" style="left:728.7px;top:529.62px;font-size:8.6px;color:#000;letter-spacing:-0.75px">18:00</div>
<div class="t" style="left:864.7px;top:529.62px;font-size:8.6px;color:#000;letter-spacing:-0.75px">00:00</div>
<div class="t" style="left:973px;top:69.04px;font-size:12px;color:#000;transform:scaleX(0.879);transform-origin:0 0;">Properties</div>
<div style="position:absolute;left:972px;top:87px;width:23px;height:21px;background:#cce8ff;border:1px solid #99d1ff;box-sizing:border-box"></div>
<svg style="position:absolute;left:968px;top:84px" width="80" height="26" viewBox="0 0 80 26"><rect x="7.5" y="6.5" width="6" height="6" rx="1" fill="#fff" stroke="#4a86d0" stroke-width="1"/><rect x="7.5" y="15.5" width="6" height="6" rx="1" fill="#fff" stroke="#4a86d0" stroke-width="1"/><g shape-rendering="crispEdges"><rect x="10" y="7" width="1" height="5" fill="#000" opacity="0.55"/><rect x="8" y="9" width="5" height="1" fill="#000" opacity="0.55"/><rect x="9" y="9" width="3" height="1" fill="#000"/><rect x="10" y="8" width="1" height="3" fill="#000"/><rect x="10" y="16" width="1" height="5" fill="#000" opacity="0.55"/><rect x="8" y="18" width="5" height="1" fill="#000" opacity="0.55"/><rect x="9" y="18" width="3" height="1" fill="#000"/><rect x="10" y="17" width="1" height="3" fill="#000"/><rect x="15" y="8" width="4" height="1" fill="#505050"/><rect x="15" y="19" width="4" height="1" fill="#505050"/><rect x="15" y="10" width="2" height="1" fill="#a898c8"/><rect x="17" y="10" width="2" height="1" fill="#70a890"/><rect x="20" y="10" width="2" height="1" fill="#a898c8"/><rect x="22" y="10" width="1" height="1" fill="#70a890"/><rect x="15" y="12" width="2" height="1" fill="#a898c8"/><rect x="17" y="12" width="2" height="1" fill="#70a890"/><rect x="20" y="12" width="2" height="1" fill="#a898c8"/><rect x="22" y="12" width="1" height="1" fill="#70a890"/><rect x="15" y="14" width="2" height="1" fill="#a898c8"/><rect x="17" y="14" width="2" height="1" fill="#70a890"/><rect x="20" y="14" width="2" height="1" fill="#a898c8"/><rect x="22" y="14" width="1" height="1" fill="#70a890"/><rect x="15" y="16" width="2" height="1" fill="#a898c8"/><rect x="17" y="16" width="2" height="1" fill="#70a890"/><rect x="20" y="16" width="2" height="1" fill="#a898c8"/><rect x="22" y="16" width="1" height="1" fill="#70a890"/><rect x="15" y="21" width="2" height="1" fill="#a898c8"/><rect x="17" y="21" width="2" height="1" fill="#70a890"/><rect x="20" y="21" width="2" height="1" fill="#a898c8"/><rect x="22" y="21" width="1" height="1" fill="#70a890"/></g><text x="29.6" y="13.3" font-family="Liberation Serif" font-size="9.5" fill="#1f3fc0">A</text><text x="29.8" y="21" font-family="Liberation Serif" font-size="9.5" fill="#c02030">Z</text><path d="M42.5 6 V20.5" stroke="#000" stroke-width="1.2"/><path d="M40 17.5 L42.5 21 L45 17.5" fill="none" stroke="#000" stroke-width="1.2"/><rect x="52" y="4" width="1" height="20" fill="#a0a0a0"/><rect x="59.5" y="6.5" width="15" height="14" fill="#f4f4f4" stroke="#b8b8b8"/><rect x="60" y="7" width="14" height="2" fill="#c8c8c8"/><path d="M62.5 11.5 H67.5 L68.5 10.5 H72.5 V18.5 H62.5 Z" fill="none" stroke="#c0c0c0"/><path d="M64 14.5 H65 M64 16.5 H65 M66 16.5 H70" stroke="#b0b0b0"/></svg>
<div style="position:absolute;left:973px;top:113px;width:389px;height:380px;background:#fff"></div>
<div style="position:absolute;left:973px;top:113px;width:389px;height:16px;background:#a0a0a0"></div>
<div style="position:absolute;left:973px;top:129px;width:19px;height:352px;background:#a0a0a0"></div>
<svg style="position:absolute;left:975.5px;top:117px;" width="10" height="8" viewBox="0 0 10 8"><path d="M1.4 1.8 L5 5.4 L8.6 1.8" fill="none" stroke="#333" stroke-width="2"/></svg>
<div class="t" style="left:995.5px;top:110.84px;font-size:12px;color:#000;font-weight:bold;transform:scaleX(0.98);transform-origin:0 0;">BacnetProperty</div>
<div style="position:absolute;left:992px;top:129px;width:167px;height:15px;background:#a0a0a0"></div>
<div style="position:absolute;left:992px;top:144px;width:370px;height:1px;background:#a0a0a0"></div>
<div class="t" style="left:996px;top:126.84px;font-size:12px;color:#000;transform:scaleX(0.879);transform-origin:0 0;">Apdu Timeout</div>
<div style="position:absolute;left:1159px;top:129px;width:1px;height:15px;background:#a0a0a0"></div>
<div style="position:absolute;left:1160px;top:129px;width:202px;height:15px;background:#fff"></div>
<div class="t" style="left:1163px;top:126.84px;font-size:12px;color:#000;transform:scaleX(0.879);transform-origin:0 0;">3000</div>
<div style="position:absolute;left:992px;top:160px;width:370px;height:1px;background:#a0a0a0"></div>
<div class="t" style="left:996px;top:142.84px;font-size:12px;color:#000;transform:scaleX(0.879);transform-origin:0 0;">Application Software Version</div>
<div style="position:absolute;left:1159px;top:145px;width:1px;height:15px;background:#a0a0a0"></div>
<div style="position:absolute;left:1160px;top:145px;width:202px;height:15px;background:#fff"></div>
<div class="t" style="left:1163px;top:142.84px;font-size:12px;color:#000;transform:scaleX(0.879);transform-origin:0 0;">1.0</div>
<div style="position:absolute;left:992px;top:176px;width:370px;height:1px;background:#a0a0a0"></div>
<div class="t" style="left:996px;top:158.84px;font-size:12px;color:#000;transform:scaleX(0.879);transform-origin:0 0;">Database Revision</div>
<div style="position:absolute;left:1159px;top:161px;width:1px;height:15px;background:#a0a0a0"></div>
<div style="position:absolute;left:1160px;top:161px;width:202px;height:15px;background:#fff"></div>
<div class="t" style="left:1163px;top:158.84px;font-size:12px;color:#000;transform:scaleX(0.879);transform-origin:0 0;">1</div>
<div style="position:absolute;left:992px;top:192px;width:370px;height:1px;background:#a0a0a0"></div>
<div class="t" style="left:996px;top:174.84px;font-size:12px;color:#000;transform:scaleX(0.879);transform-origin:0 0;">Description</div>
<div style="position:absolute;left:1159px;top:177px;width:1px;height:15px;background:#a0a0a0"></div>
<div style="position:absolute;left:1160px;top:177px;width:202px;height:15px;background:#fff"></div>
<div class="t" style="left:1163px;top:174.84px;font-size:12px;color:#000;transform:scaleX(0.879);transform-origin:0 0;">PNTECH Expansion Module</div>
<div style="position:absolute;left:992px;top:208px;width:370px;height:1px;background:#a0a0a0"></div>
<div class="t" style="left:996px;top:190.84px;font-size:12px;color:#000;transform:scaleX(0.879);transform-origin:0 0;">Device Address Binding</div>
<div style="position:absolute;left:1159px;top:193px;width:1px;height:15px;background:#a0a0a0"></div>
<div style="position:absolute;left:1160px;top:193px;width:202px;height:15px;background:#fff"></div>
<div class="t" style="left:1163px;top:190.84px;font-size:12px;color:#000;transform:scaleX(0.879);transform-origin:0 0;"></div>
<div style="position:absolute;left:992px;top:224px;width:370px;height:1px;background:#a0a0a0"></div>
<div class="t" style="left:996px;top:206.84px;font-size:12px;color:#000;transform:scaleX(0.879);transform-origin:0 0;">Firmware Revision</div>
<div style="position:absolute;left:1159px;top:209px;width:1px;height:15px;background:#a0a0a0"></div>
<div style="position:absolute;left:1160px;top:209px;width:202px;height:15px;background:#fff"></div>
<div class="t" style="left:1163px;top:206.84px;font-size:12px;color:#000;transform:scaleX(0.879);transform-origin:0 0;">0.9.1</div>
<div style="position:absolute;left:992px;top:240px;width:370px;height:1px;background:#a0a0a0"></div>
<div class="t" style="left:996px;top:222.84px;font-size:12px;color:#000;transform:scaleX(0.879);transform-origin:0 0;">Location</div>
<div style="position:absolute;left:1159px;top:225px;width:1px;height:15px;background:#a0a0a0"></div>
<div style="position:absolute;left:1160px;top:225px;width:202px;height:15px;background:#fff"></div>
<div class="t" style="left:1163px;top:222.84px;font-size:12px;color:#000;transform:scaleX(0.879);transform-origin:0 0;">Viet Nam</div>
<div style="position:absolute;left:992px;top:256px;width:370px;height:1px;background:#a0a0a0"></div>
<div class="t" style="left:996px;top:238.84px;font-size:12px;color:#000;transform:scaleX(0.879);transform-origin:0 0;">Max Apdu Length Accepted</div>
<div style="position:absolute;left:1159px;top:241px;width:1px;height:15px;background:#a0a0a0"></div>
<div style="position:absolute;left:1160px;top:241px;width:202px;height:15px;background:#fff"></div>
<div class="t" style="left:1163px;top:238.84px;font-size:12px;color:#000;transform:scaleX(0.879);transform-origin:0 0;">206</div>
<div style="position:absolute;left:992px;top:272px;width:370px;height:1px;background:#a0a0a0"></div>
<div class="t" style="left:996px;top:254.84px;font-size:12px;color:#000;transform:scaleX(0.879);transform-origin:0 0;">Model Name</div>
<div style="position:absolute;left:1159px;top:257px;width:1px;height:15px;background:#a0a0a0"></div>
<div style="position:absolute;left:1160px;top:257px;width:202px;height:15px;background:#fff"></div>
<div class="t" style="left:1163px;top:254.84px;font-size:12px;color:#000;transform:scaleX(0.879);transform-origin:0 0;">EXP-8UI8BI</div>
<div style="position:absolute;left:992px;top:288px;width:370px;height:1px;background:#a0a0a0"></div>
<div class="t" style="left:996px;top:270.84px;font-size:12px;color:#000;transform:scaleX(0.879);transform-origin:0 0;">Number Of Apdu Retries</div>
<div style="position:absolute;left:1159px;top:273px;width:1px;height:15px;background:#a0a0a0"></div>
<div style="position:absolute;left:1160px;top:273px;width:202px;height:15px;background:#fff"></div>
<div class="t" style="left:1163px;top:270.84px;font-size:12px;color:#000;transform:scaleX(0.879);transform-origin:0 0;">3</div>
<div style="position:absolute;left:992px;top:304px;width:370px;height:1px;background:#a0a0a0"></div>
<div class="t" style="left:996px;top:286.84px;font-size:12px;color:#000;transform:scaleX(0.879);transform-origin:0 0;">Object Identifier</div>
<div style="position:absolute;left:1159px;top:289px;width:1px;height:15px;background:#a0a0a0"></div>
<div style="position:absolute;left:1160px;top:289px;width:202px;height:15px;background:#fff"></div>
<div class="t" style="left:1163px;top:286.84px;font-size:12px;color:#000;transform:scaleX(0.879);transform-origin:0 0;">OBJECT_DEVICE:2</div>
<svg style="position:absolute;left:977px;top:293px;" width="8" height="10" viewBox="0 0 8 10"><path d="M1.8 1.2 L5.4 4.8 L1.8 8.4" fill="none" stroke="#6e6e6e" stroke-width="2"/></svg>
<div style="position:absolute;left:992px;top:320px;width:370px;height:1px;background:#a0a0a0"></div>
<div class="t" style="left:996px;top:302.84px;font-size:12px;color:#000;transform:scaleX(0.879);transform-origin:0 0;">Object List</div>
<div style="position:absolute;left:1159px;top:305px;width:1px;height:15px;background:#a0a0a0"></div>
<div style="position:absolute;left:1160px;top:305px;width:202px;height:15px;background:#fff"></div>
<div class="t" style="left:1163px;top:302.84px;font-size:12px;color:#000;transform:scaleX(0.879);transform-origin:0 0;">Object[] Array</div>
<svg style="position:absolute;left:977px;top:309px;" width="8" height="10" viewBox="0 0 8 10"><path d="M1.8 1.2 L5.4 4.8 L1.8 8.4" fill="none" stroke="#6e6e6e" stroke-width="2"/></svg>
<div style="position:absolute;left:992px;top:336px;width:370px;height:1px;background:#a0a0a0"></div>
<div class="t" style="left:996px;top:318.84px;font-size:12px;color:#000;transform:scaleX(0.879);transform-origin:0 0;">Object Name</div>
<div style="position:absolute;left:1159px;top:321px;width:1px;height:15px;background:#a0a0a0"></div>
<div style="position:absolute;left:1160px;top:321px;width:202px;height:15px;background:#fff"></div>
<div class="t" style="left:1163px;top:318.84px;font-size:12px;color:#000;transform:scaleX(0.879);transform-origin:0 0;">DEVICE-0</div>
<div style="position:absolute;left:992px;top:352px;width:370px;height:1px;background:#a0a0a0"></div>
<div class="t" style="left:996px;top:334.84px;font-size:12px;color:#000;transform:scaleX(0.879);transform-origin:0 0;">Object Type</div>
<div style="position:absolute;left:1159px;top:337px;width:1px;height:15px;background:#a0a0a0"></div>
<div style="position:absolute;left:1160px;top:337px;width:202px;height:15px;background:#fff"></div>
<div class="t" style="left:1163px;top:334.84px;font-size:12px;color:#000;transform:scaleX(0.879);transform-origin:0 0;">8 : Object Device</div>
<div style="position:absolute;left:992px;top:368px;width:370px;height:1px;background:#a0a0a0"></div>
<div class="t" style="left:996px;top:350.84px;font-size:12px;color:#000;transform:scaleX(0.879);transform-origin:0 0;">Protocol Object Types Supported</div>
<div style="position:absolute;left:1159px;top:353px;width:1px;height:15px;background:#a0a0a0"></div>
<div style="position:absolute;left:1160px;top:353px;width:202px;height:15px;background:#fff"></div>
<div class="t" style="left:1163px;top:350.84px;font-size:12px;color:#000;transform:scaleX(0.879);transform-origin:0 0;">1011000010000000000000000000000000000</div>
<div style="position:absolute;left:992px;top:384px;width:370px;height:1px;background:#a0a0a0"></div>
<div class="t" style="left:996px;top:366.84px;font-size:12px;color:#000;transform:scaleX(0.879);transform-origin:0 0;">Protocol Revision</div>
<div style="position:absolute;left:1159px;top:369px;width:1px;height:15px;background:#a0a0a0"></div>
<div style="position:absolute;left:1160px;top:369px;width:202px;height:15px;background:#fff"></div>
<div class="t" style="left:1163px;top:366.84px;font-size:12px;color:#000;transform:scaleX(0.879);transform-origin:0 0;">14</div>
<div style="position:absolute;left:992px;top:400px;width:370px;height:1px;background:#a0a0a0"></div>
<div class="t" style="left:996px;top:382.84px;font-size:12px;color:#000;transform:scaleX(0.879);transform-origin:0 0;">Protocol Services Supported</div>
<div style="position:absolute;left:1159px;top:385px;width:1px;height:15px;background:#a0a0a0"></div>
<div style="position:absolute;left:1160px;top:385px;width:202px;height:15px;background:#fff"></div>
<div class="t" style="left:1163px;top:382.84px;font-size:12px;color:#000;transform:scaleX(0.879);transform-origin:0 0;">0000000000001011010010000000000000000</div>
<div style="position:absolute;left:992px;top:416px;width:370px;height:1px;background:#a0a0a0"></div>
<div class="t" style="left:996px;top:398.84px;font-size:12px;color:#000;transform:scaleX(0.879);transform-origin:0 0;">Protocol Version</div>
<div style="position:absolute;left:1159px;top:401px;width:1px;height:15px;background:#a0a0a0"></div>
<div style="position:absolute;left:1160px;top:401px;width:202px;height:15px;background:#fff"></div>
<div class="t" style="left:1163px;top:398.84px;font-size:12px;color:#000;transform:scaleX(0.879);transform-origin:0 0;">1</div>
<div style="position:absolute;left:992px;top:432px;width:370px;height:1px;background:#a0a0a0"></div>
<div class="t" style="left:996px;top:414.84px;font-size:12px;color:#000;transform:scaleX(0.879);transform-origin:0 0;">Segmentation Supported</div>
<div style="position:absolute;left:1159px;top:417px;width:1px;height:15px;background:#a0a0a0"></div>
<div style="position:absolute;left:1160px;top:417px;width:202px;height:15px;background:#fff"></div>
<div class="t" style="left:1163px;top:414.84px;font-size:12px;color:#000;transform:scaleX(0.879);transform-origin:0 0;">3 : None</div>
<div style="position:absolute;left:992px;top:448px;width:370px;height:1px;background:#a0a0a0"></div>
<div class="t" style="left:996px;top:430.84px;font-size:12px;color:#000;transform:scaleX(0.879);transform-origin:0 0;">System Status</div>
<div style="position:absolute;left:1159px;top:433px;width:1px;height:15px;background:#a0a0a0"></div>
<div style="position:absolute;left:1160px;top:433px;width:202px;height:15px;background:#fff"></div>
<div class="t" style="left:1163px;top:430.84px;font-size:12px;color:#000;transform:scaleX(0.879);transform-origin:0 0;">0 : Operational</div>
<div style="position:absolute;left:992px;top:464px;width:370px;height:1px;background:#a0a0a0"></div>
<div class="t" style="left:996px;top:446.84px;font-size:12px;color:#000;transform:scaleX(0.879);transform-origin:0 0;">Vendor Identifier</div>
<div style="position:absolute;left:1159px;top:449px;width:1px;height:15px;background:#a0a0a0"></div>
<div style="position:absolute;left:1160px;top:449px;width:202px;height:15px;background:#fff"></div>
<div class="t" style="left:1163px;top:446.84px;font-size:12px;color:#000;transform:scaleX(0.879);transform-origin:0 0;">599</div>
<div style="position:absolute;left:992px;top:480px;width:370px;height:1px;background:#a0a0a0"></div>
<div class="t" style="left:996px;top:462.84px;font-size:12px;color:#000;transform:scaleX(0.879);transform-origin:0 0;">Vendor Name</div>
<div style="position:absolute;left:1159px;top:465px;width:1px;height:15px;background:#a0a0a0"></div>
<div style="position:absolute;left:1160px;top:465px;width:202px;height:15px;background:#fff"></div>
<div class="t" style="left:1163px;top:462.84px;font-size:12px;color:#000;transform:scaleX(0.879);transform-origin:0 0;">PNTECH JSC</div>
<div style="position:absolute;left:968px;top:108px;width:399px;height:390px;border:5px solid #22b14c;box-sizing:border-box"></div>
<div style="position:absolute;left:970px;top:500px;width:396px;height:59px;background:#f0f0f0;border:1px solid #a0a0a0;box-sizing:border-box"></div>
<div class="t" style="left:976px;top:499.84px;font-size:12px;color:#000;font-weight:bold;transform:scaleX(0.97);transform-origin:0 0;">Apdu Timeout</div>
<div class="t" style="left:976px;top:514.84px;font-size:12px;color:#000;transform:scaleX(0.879);transform-origin:0 0;">BACNET_APPLICATION_TAG_UNSIGNED_INT</div>
<div class="t" style="left:3px;top:560.34px;font-size:12px;color:#000;transform:scaleX(0.879);transform-origin:0 0;">Log</div>
<div style="position:absolute;left:0px;top:576px;width:1366px;height:152px;background:#fff;border:1px solid #646464;box-sizing:border-box"></div>
<div class="t" style="left:3px;top:575.84px;font-size:12px;color:#000;transform:scaleX(0.879);transform-origin:0 0;">Sending ReadPropertyRequest ...</div>
<div class="t" style="left:3px;top:588.84px;font-size:12px;color:#000;transform:scaleX(0.879);transform-origin:0 0;">ComplexAck</div>
<div class="t" style="left:3px;top:601.84px;font-size:12px;color:#000;transform:scaleX(0.879);transform-origin:0 0;">Sending ReadPropertyRequest ...</div>
<div class="t" style="left:3px;top:614.84px;font-size:12px;color:#000;transform:scaleX(0.879);transform-origin:0 0;">ComplexAck</div>
<div class="t" style="left:3px;top:627.84px;font-size:12px;color:#000;transform:scaleX(0.879);transform-origin:0 0;">Sending ReadPropertyRequest ...</div>
<div class="t" style="left:3px;top:640.84px;font-size:12px;color:#000;transform:scaleX(0.879);transform-origin:0 0;">ComplexAck</div>
<div class="t" style="left:3px;top:653.84px;font-size:12px;color:#000;transform:scaleX(0.879);transform-origin:0 0;">Sending ReadPropertyRequest ...</div>
<div class="t" style="left:3px;top:666.84px;font-size:12px;color:#000;transform:scaleX(0.879);transform-origin:0 0;">ComplexAck</div>
<div class="t" style="left:3px;top:679.84px;font-size:12px;color:#000;transform:scaleX(0.879);transform-origin:0 0;">Sending ReadPropertyRequest ...</div>
<div class="t" style="left:3px;top:692.84px;font-size:12px;color:#000;transform:scaleX(0.879);transform-origin:0 0;">ComplexAck</div>
<div style="position:absolute;left:1348px;top:578px;width:16px;height:148px;background:#f0f0f0"></div>
<div style="position:absolute;left:1348px;top:687px;width:15px;height:22px;background:#cdcdcd"></div>
<svg style="position:absolute;left:1352px;top:584px;" width="8" height="7" viewBox="0 0 8 7"><path d="M0 3.6 L3.5 0 L7 3.6 L7 6.3 L3.5 2.8 L0 6.3 Z" fill="#5a5a5a"/></svg>
<svg style="position:absolute;left:1352px;top:715px;" width="8" height="7" viewBox="0 0 8 7"><path d="M0 0 L3.5 3.5 L7 0 L7 2.7 L3.5 6.3 L0 2.7 Z" fill="#5a5a5a"/></svg>
<div style="position:absolute;left:1365px;top:48px;width:1px;height:22px;background:linear-gradient(#d8d8d8,#808080)"></div>
</body></html>
